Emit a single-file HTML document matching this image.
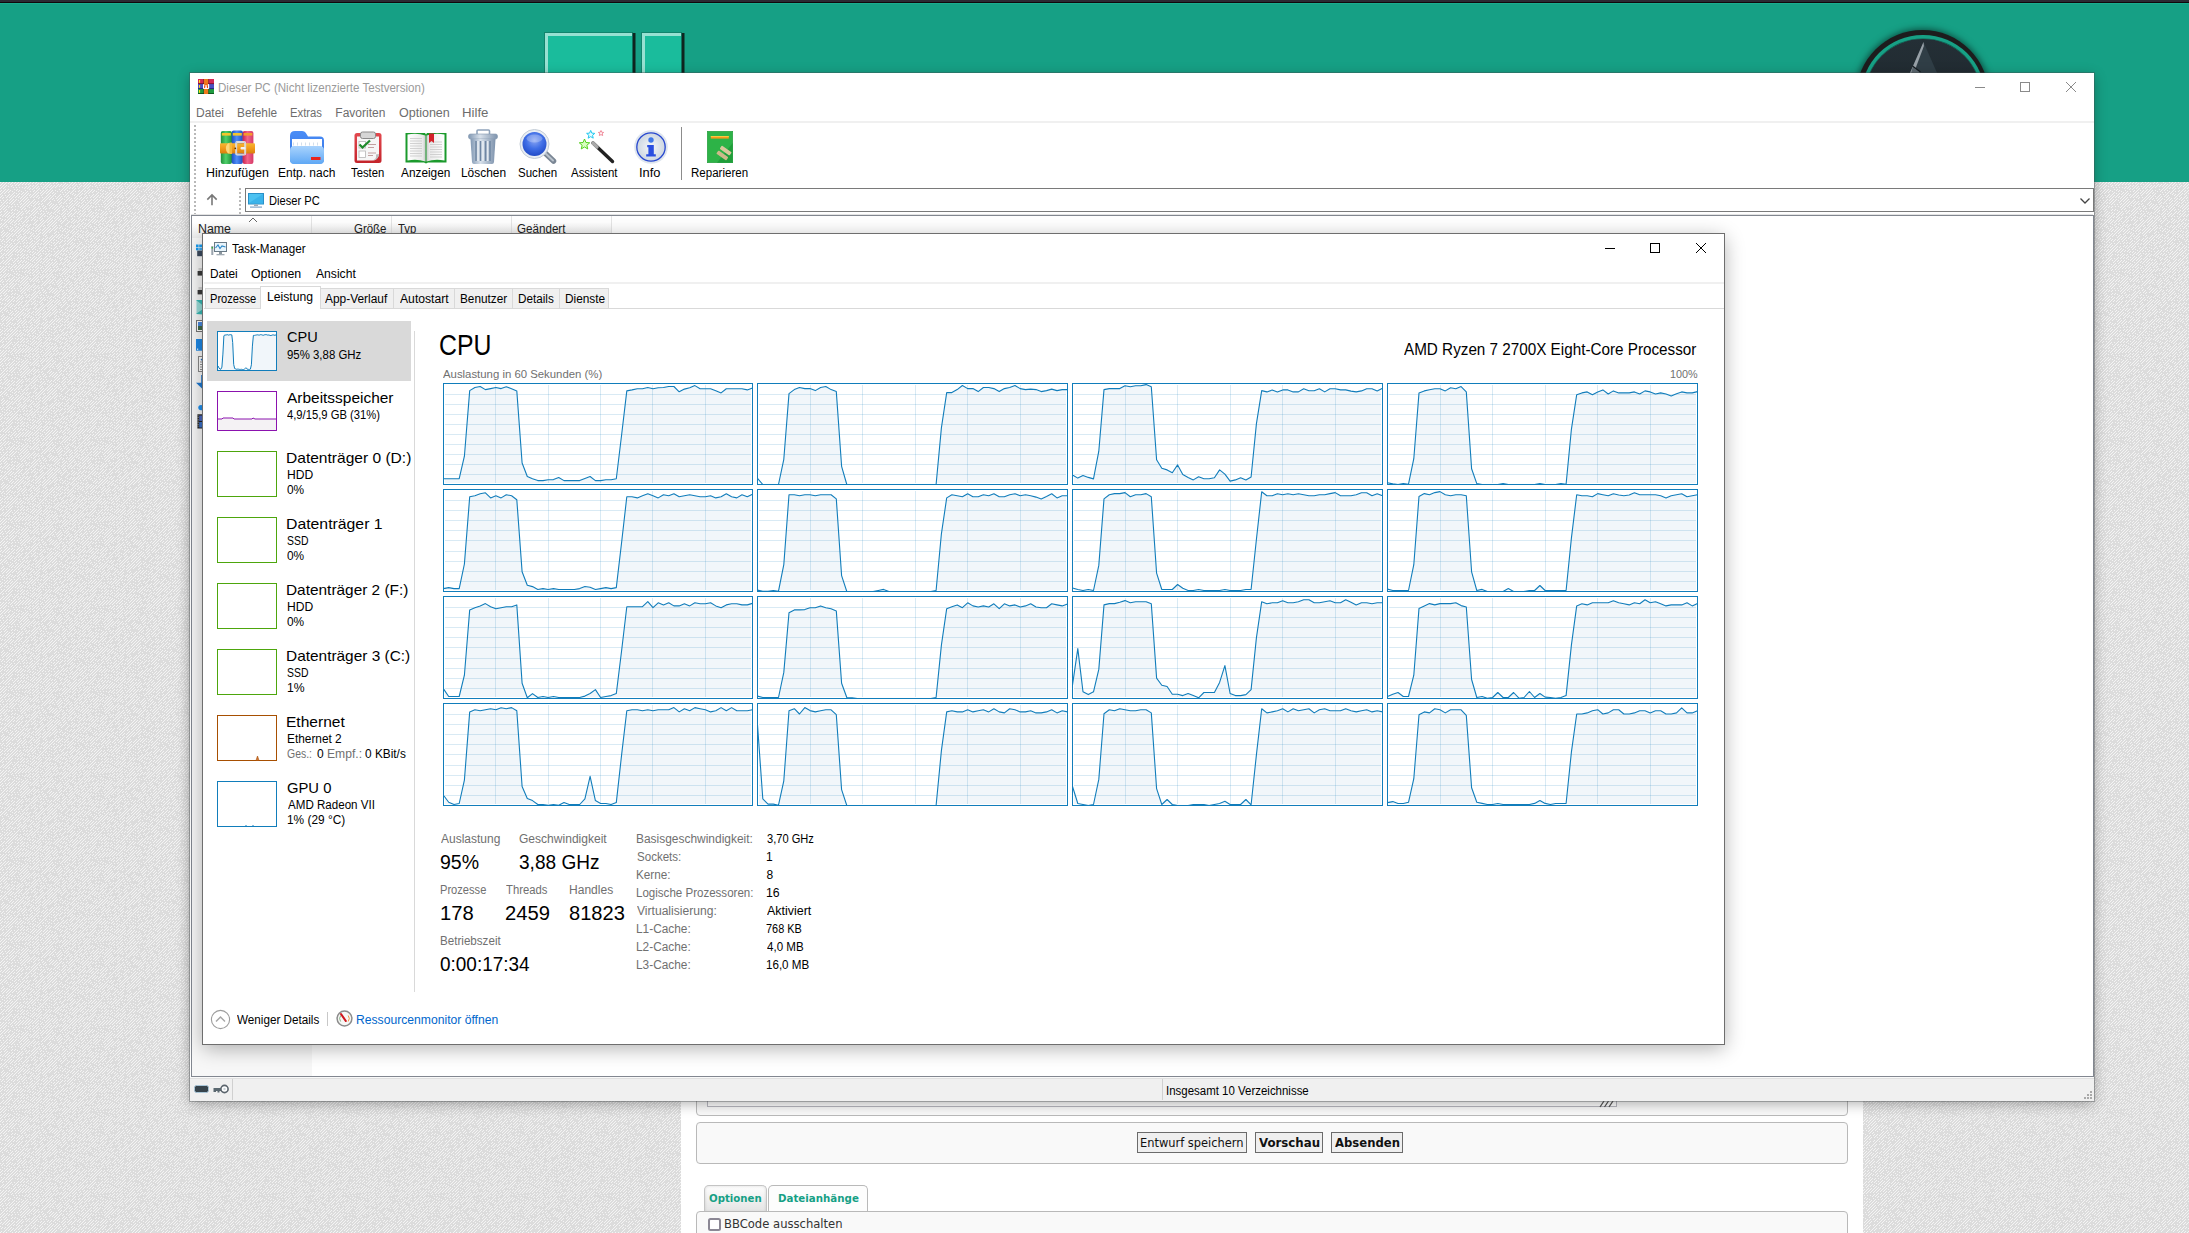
<!DOCTYPE html><html lang="de"><head><meta charset="utf-8"><title>Task-Manager</title><style>
html,body{margin:0;padding:0}
body{width:2189px;height:1233px;overflow:hidden;position:relative;background:#e4e4e4;font-family:"Liberation Sans",sans-serif}
.t{position:absolute;height:0;line-height:0;white-space:nowrap}
.abs{position:absolute}
</style></head><body>
<svg width="0" height="0" style="position:absolute"><defs>
<linearGradient id="gGreen" x1="0" x2="1"><stop offset="0" stop-color="#1f8f3a"/><stop offset=".45" stop-color="#4fd06a"/><stop offset="1" stop-color="#1f8f3a"/></linearGradient>
<linearGradient id="gBlue" x1="0" x2="1"><stop offset="0" stop-color="#1d4fc4"/><stop offset=".45" stop-color="#4f8df5"/><stop offset="1" stop-color="#1d4fc4"/></linearGradient>
<linearGradient id="gRed" x1="0" x2="1"><stop offset="0" stop-color="#c8214a"/><stop offset=".45" stop-color="#f0658a"/><stop offset="1" stop-color="#d63a68"/></linearGradient>
<linearGradient id="gBelt" x1="0" y1="0" x2="0" y2="1"><stop offset="0" stop-color="#f7b733"/><stop offset=".5" stop-color="#f19a1a"/><stop offset="1" stop-color="#d97f0e"/></linearGradient>
<linearGradient id="gFold" x1="0" y1="0" x2="0" y2="1"><stop offset="0" stop-color="#a9d3fd"/><stop offset="1" stop-color="#5fa8f5"/></linearGradient>
<linearGradient id="gFoldB" x1="0" y1="0" x2="0" y2="1"><stop offset="0" stop-color="#4b8ef7"/><stop offset="1" stop-color="#2f6fe0"/></linearGradient>
<linearGradient id="gPage" x1="0" x2="1"><stop offset="0" stop-color="#ffffff"/><stop offset=".85" stop-color="#e9e9e9"/><stop offset="1" stop-color="#c9c9c9"/></linearGradient>
<linearGradient id="gPage2" x1="0" x2="1"><stop offset="0" stop-color="#c9c9c9"/><stop offset=".15" stop-color="#e9e9e9"/><stop offset="1" stop-color="#ffffff"/></linearGradient>
<linearGradient id="gCan" x1="0" x2="1"><stop offset="0" stop-color="#8198b3"/><stop offset=".4" stop-color="#d7e0ea"/><stop offset="1" stop-color="#7e93ad"/></linearGradient>
<radialGradient id="gLens" cx=".5" cy=".35" r=".7"><stop offset="0" stop-color="#8aa6f3"/><stop offset=".5" stop-color="#3f6ee6"/><stop offset="1" stop-color="#1c45c2"/></radialGradient>
<radialGradient id="gInfo" cx=".5" cy=".5" r=".6"><stop offset="0" stop-color="#f4f7fa"/><stop offset="1" stop-color="#c5d0dc"/></radialGradient>
<linearGradient id="gClip" x1="0" y1="0" x2="0" y2="1"><stop offset="0" stop-color="#e2494f"/><stop offset="1" stop-color="#c4242b"/></linearGradient>
</defs></svg>
<svg class="abs" style="left:0;top:182px" width="2189" height="1051" shape-rendering="crispEdges"><defs><pattern id="tex" width="84" height="84" patternUnits="userSpaceOnUse"><rect width="84" height="84" fill="#dcdcdc"/><path d="M0 0h1v1h-1zM3 0h1v1h-1zM6 0h1v1h-1zM9 0h1v1h-1zM12 0h1v1h-1zM15 0h1v1h-1zM18 0h1v1h-1zM21 0h1v1h-1zM24 0h1v1h-1zM27 0h1v1h-1zM30 0h1v1h-1zM33 0h1v1h-1zM36 0h1v1h-1zM42 0h1v1h-1zM45 0h1v1h-1zM48 0h1v1h-1zM54 0h1v1h-1zM57 0h1v1h-1zM63 0h1v1h-1zM69 0h1v1h-1zM72 0h1v1h-1zM75 0h1v1h-1zM78 0h1v1h-1zM2 1h1v1h-1zM5 1h1v1h-1zM8 1h1v1h-1zM11 1h1v1h-1zM14 1h1v1h-1zM17 1h1v1h-1zM20 1h1v1h-1zM23 1h1v1h-1zM26 1h1v1h-1zM29 1h1v1h-1zM32 1h1v1h-1zM35 1h1v1h-1zM38 1h1v1h-1zM41 1h1v1h-1zM47 1h1v1h-1zM50 1h1v1h-1zM53 1h1v1h-1zM56 1h1v1h-1zM65 1h1v1h-1zM71 1h1v1h-1zM74 1h1v1h-1zM80 1h1v1h-1zM83 1h1v1h-1zM1 2h1v1h-1zM4 2h1v1h-1zM10 2h1v1h-1zM16 2h1v1h-1zM19 2h1v1h-1zM22 2h1v1h-1zM25 2h1v1h-1zM28 2h1v1h-1zM37 2h1v1h-1zM40 2h1v1h-1zM43 2h1v1h-1zM46 2h1v1h-1zM49 2h1v1h-1zM58 2h1v1h-1zM61 2h1v1h-1zM64 2h1v1h-1zM67 2h1v1h-1zM70 2h1v1h-1zM73 2h1v1h-1zM76 2h1v1h-1zM79 2h1v1h-1zM0 3h1v1h-1zM3 3h1v1h-1zM6 3h1v1h-1zM12 3h1v1h-1zM15 3h1v1h-1zM18 3h1v1h-1zM30 3h1v1h-1zM33 3h1v1h-1zM36 3h1v1h-1zM45 3h1v1h-1zM48 3h1v1h-1zM51 3h1v1h-1zM54 3h1v1h-1zM57 3h1v1h-1zM60 3h1v1h-1zM63 3h1v1h-1zM66 3h1v1h-1zM69 3h1v1h-1zM72 3h1v1h-1zM75 3h1v1h-1zM81 3h1v1h-1zM2 4h1v1h-1zM5 4h1v1h-1zM8 4h1v1h-1zM11 4h1v1h-1zM26 4h1v1h-1zM29 4h1v1h-1zM32 4h1v1h-1zM35 4h1v1h-1zM38 4h1v1h-1zM41 4h1v1h-1zM44 4h1v1h-1zM47 4h1v1h-1zM50 4h1v1h-1zM53 4h1v1h-1zM56 4h1v1h-1zM59 4h1v1h-1zM62 4h1v1h-1zM65 4h1v1h-1zM68 4h1v1h-1zM74 4h1v1h-1zM77 4h1v1h-1zM80 4h1v1h-1zM83 4h1v1h-1zM1 5h1v1h-1zM4 5h1v1h-1zM13 5h1v1h-1zM16 5h1v1h-1zM19 5h1v1h-1zM22 5h1v1h-1zM25 5h1v1h-1zM28 5h1v1h-1zM34 5h1v1h-1zM37 5h1v1h-1zM43 5h1v1h-1zM46 5h1v1h-1zM49 5h1v1h-1zM52 5h1v1h-1zM55 5h1v1h-1zM64 5h1v1h-1zM67 5h1v1h-1zM70 5h1v1h-1zM73 5h1v1h-1zM79 5h1v1h-1zM0 6h1v1h-1zM3 6h1v1h-1zM24 6h1v1h-1zM27 6h1v1h-1zM30 6h1v1h-1zM33 6h1v1h-1zM36 6h1v1h-1zM39 6h1v1h-1zM42 6h1v1h-1zM45 6h1v1h-1zM51 6h1v1h-1zM63 6h1v1h-1zM66 6h1v1h-1zM69 6h1v1h-1zM72 6h1v1h-1zM75 6h1v1h-1zM78 6h1v1h-1zM5 7h1v1h-1zM8 7h1v1h-1zM14 7h1v1h-1zM17 7h1v1h-1zM29 7h1v1h-1zM32 7h1v1h-1zM38 7h1v1h-1zM47 7h1v1h-1zM50 7h1v1h-1zM59 7h1v1h-1zM62 7h1v1h-1zM65 7h1v1h-1zM74 7h1v1h-1zM83 7h1v1h-1zM1 8h1v1h-1zM4 8h1v1h-1zM7 8h1v1h-1zM10 8h1v1h-1zM16 8h1v1h-1zM19 8h1v1h-1zM25 8h1v1h-1zM34 8h1v1h-1zM37 8h1v1h-1zM40 8h1v1h-1zM43 8h1v1h-1zM46 8h1v1h-1zM49 8h1v1h-1zM52 8h1v1h-1zM55 8h1v1h-1zM61 8h1v1h-1zM64 8h1v1h-1zM67 8h1v1h-1zM73 8h1v1h-1zM79 8h1v1h-1zM82 8h1v1h-1zM0 9h1v1h-1zM3 9h1v1h-1zM6 9h1v1h-1zM9 9h1v1h-1zM12 9h1v1h-1zM18 9h1v1h-1zM21 9h1v1h-1zM27 9h1v1h-1zM30 9h1v1h-1zM33 9h1v1h-1zM36 9h1v1h-1zM42 9h1v1h-1zM45 9h1v1h-1zM48 9h1v1h-1zM51 9h1v1h-1zM57 9h1v1h-1zM60 9h1v1h-1zM69 9h1v1h-1zM72 9h1v1h-1zM75 9h1v1h-1zM78 9h1v1h-1zM81 9h1v1h-1zM2 10h1v1h-1zM5 10h1v1h-1zM8 10h1v1h-1zM14 10h1v1h-1zM23 10h1v1h-1zM26 10h1v1h-1zM35 10h1v1h-1zM38 10h1v1h-1zM41 10h1v1h-1zM44 10h1v1h-1zM47 10h1v1h-1zM50 10h1v1h-1zM53 10h1v1h-1zM62 10h1v1h-1zM65 10h1v1h-1zM68 10h1v1h-1zM71 10h1v1h-1zM80 10h1v1h-1zM1 11h1v1h-1zM4 11h1v1h-1zM13 11h1v1h-1zM16 11h1v1h-1zM19 11h1v1h-1zM22 11h1v1h-1zM25 11h1v1h-1zM28 11h1v1h-1zM34 11h1v1h-1zM37 11h1v1h-1zM40 11h1v1h-1zM43 11h1v1h-1zM46 11h1v1h-1zM49 11h1v1h-1zM52 11h1v1h-1zM55 11h1v1h-1zM67 11h1v1h-1zM70 11h1v1h-1zM73 11h1v1h-1zM79 11h1v1h-1zM82 11h1v1h-1zM0 12h1v1h-1zM9 12h1v1h-1zM12 12h1v1h-1zM18 12h1v1h-1zM21 12h1v1h-1zM24 12h1v1h-1zM27 12h1v1h-1zM30 12h1v1h-1zM33 12h1v1h-1zM36 12h1v1h-1zM42 12h1v1h-1zM48 12h1v1h-1zM54 12h1v1h-1zM60 12h1v1h-1zM63 12h1v1h-1zM66 12h1v1h-1zM72 12h1v1h-1zM75 12h1v1h-1zM78 12h1v1h-1zM81 12h1v1h-1zM2 13h1v1h-1zM5 13h1v1h-1zM8 13h1v1h-1zM11 13h1v1h-1zM14 13h1v1h-1zM17 13h1v1h-1zM23 13h1v1h-1zM26 13h1v1h-1zM29 13h1v1h-1zM32 13h1v1h-1zM35 13h1v1h-1zM38 13h1v1h-1zM41 13h1v1h-1zM47 13h1v1h-1zM50 13h1v1h-1zM53 13h1v1h-1zM59 13h1v1h-1zM65 13h1v1h-1zM68 13h1v1h-1zM74 13h1v1h-1zM77 13h1v1h-1zM80 13h1v1h-1zM1 14h1v1h-1zM7 14h1v1h-1zM10 14h1v1h-1zM13 14h1v1h-1zM16 14h1v1h-1zM19 14h1v1h-1zM22 14h1v1h-1zM25 14h1v1h-1zM31 14h1v1h-1zM34 14h1v1h-1zM37 14h1v1h-1zM46 14h1v1h-1zM49 14h1v1h-1zM52 14h1v1h-1zM55 14h1v1h-1zM58 14h1v1h-1zM61 14h1v1h-1zM64 14h1v1h-1zM67 14h1v1h-1zM76 14h1v1h-1zM79 14h1v1h-1zM0 15h1v1h-1zM3 15h1v1h-1zM6 15h1v1h-1zM9 15h1v1h-1zM12 15h1v1h-1zM15 15h1v1h-1zM18 15h1v1h-1zM21 15h1v1h-1zM24 15h1v1h-1zM27 15h1v1h-1zM30 15h1v1h-1zM33 15h1v1h-1zM36 15h1v1h-1zM39 15h1v1h-1zM42 15h1v1h-1zM45 15h1v1h-1zM48 15h1v1h-1zM51 15h1v1h-1zM57 15h1v1h-1zM60 15h1v1h-1zM66 15h1v1h-1zM69 15h1v1h-1zM75 15h1v1h-1zM81 15h1v1h-1zM2 16h1v1h-1zM11 16h1v1h-1zM20 16h1v1h-1zM23 16h1v1h-1zM26 16h1v1h-1zM38 16h1v1h-1zM44 16h1v1h-1zM47 16h1v1h-1zM50 16h1v1h-1zM53 16h1v1h-1zM56 16h1v1h-1zM59 16h1v1h-1zM62 16h1v1h-1zM68 16h1v1h-1zM71 16h1v1h-1zM74 16h1v1h-1zM77 16h1v1h-1zM80 16h1v1h-1zM83 16h1v1h-1zM7 17h1v1h-1zM10 17h1v1h-1zM13 17h1v1h-1zM16 17h1v1h-1zM22 17h1v1h-1zM25 17h1v1h-1zM28 17h1v1h-1zM34 17h1v1h-1zM43 17h1v1h-1zM46 17h1v1h-1zM49 17h1v1h-1zM52 17h1v1h-1zM58 17h1v1h-1zM61 17h1v1h-1zM64 17h1v1h-1zM67 17h1v1h-1zM70 17h1v1h-1zM76 17h1v1h-1zM79 17h1v1h-1zM82 17h1v1h-1zM0 18h1v1h-1zM3 18h1v1h-1zM6 18h1v1h-1zM9 18h1v1h-1zM12 18h1v1h-1zM15 18h1v1h-1zM18 18h1v1h-1zM21 18h1v1h-1zM24 18h1v1h-1zM27 18h1v1h-1zM33 18h1v1h-1zM42 18h1v1h-1zM45 18h1v1h-1zM54 18h1v1h-1zM57 18h1v1h-1zM60 18h1v1h-1zM66 18h1v1h-1zM69 18h1v1h-1zM72 18h1v1h-1zM75 18h1v1h-1zM81 18h1v1h-1zM5 19h1v1h-1zM11 19h1v1h-1zM14 19h1v1h-1zM20 19h1v1h-1zM23 19h1v1h-1zM26 19h1v1h-1zM29 19h1v1h-1zM32 19h1v1h-1zM35 19h1v1h-1zM38 19h1v1h-1zM41 19h1v1h-1zM44 19h1v1h-1zM50 19h1v1h-1zM59 19h1v1h-1zM65 19h1v1h-1zM71 19h1v1h-1zM74 19h1v1h-1zM77 19h1v1h-1zM83 19h1v1h-1zM1 20h1v1h-1zM4 20h1v1h-1zM7 20h1v1h-1zM10 20h1v1h-1zM13 20h1v1h-1zM19 20h1v1h-1zM25 20h1v1h-1zM28 20h1v1h-1zM31 20h1v1h-1zM34 20h1v1h-1zM37 20h1v1h-1zM49 20h1v1h-1zM58 20h1v1h-1zM61 20h1v1h-1zM64 20h1v1h-1zM70 20h1v1h-1zM76 20h1v1h-1zM79 20h1v1h-1zM82 20h1v1h-1zM3 21h1v1h-1zM6 21h1v1h-1zM9 21h1v1h-1zM12 21h1v1h-1zM21 21h1v1h-1zM24 21h1v1h-1zM27 21h1v1h-1zM30 21h1v1h-1zM33 21h1v1h-1zM36 21h1v1h-1zM39 21h1v1h-1zM42 21h1v1h-1zM48 21h1v1h-1zM51 21h1v1h-1zM60 21h1v1h-1zM63 21h1v1h-1zM66 21h1v1h-1zM69 21h1v1h-1zM72 21h1v1h-1zM75 21h1v1h-1zM78 21h1v1h-1zM81 21h1v1h-1zM2 22h1v1h-1zM11 22h1v1h-1zM14 22h1v1h-1zM17 22h1v1h-1zM20 22h1v1h-1zM23 22h1v1h-1zM26 22h1v1h-1zM29 22h1v1h-1zM35 22h1v1h-1zM38 22h1v1h-1zM41 22h1v1h-1zM47 22h1v1h-1zM50 22h1v1h-1zM53 22h1v1h-1zM56 22h1v1h-1zM59 22h1v1h-1zM71 22h1v1h-1zM74 22h1v1h-1zM77 22h1v1h-1zM83 22h1v1h-1zM1 23h1v1h-1zM4 23h1v1h-1zM7 23h1v1h-1zM22 23h1v1h-1zM25 23h1v1h-1zM28 23h1v1h-1zM31 23h1v1h-1zM34 23h1v1h-1zM43 23h1v1h-1zM49 23h1v1h-1zM52 23h1v1h-1zM55 23h1v1h-1zM61 23h1v1h-1zM67 23h1v1h-1zM70 23h1v1h-1zM73 23h1v1h-1zM76 23h1v1h-1zM79 23h1v1h-1zM82 23h1v1h-1zM0 24h1v1h-1zM3 24h1v1h-1zM6 24h1v1h-1zM9 24h1v1h-1zM12 24h1v1h-1zM15 24h1v1h-1zM18 24h1v1h-1zM21 24h1v1h-1zM24 24h1v1h-1zM27 24h1v1h-1zM33 24h1v1h-1zM39 24h1v1h-1zM42 24h1v1h-1zM45 24h1v1h-1zM51 24h1v1h-1zM54 24h1v1h-1zM57 24h1v1h-1zM60 24h1v1h-1zM63 24h1v1h-1zM66 24h1v1h-1zM69 24h1v1h-1zM72 24h1v1h-1zM78 24h1v1h-1zM81 24h1v1h-1zM2 25h1v1h-1zM5 25h1v1h-1zM8 25h1v1h-1zM11 25h1v1h-1zM20 25h1v1h-1zM23 25h1v1h-1zM29 25h1v1h-1zM35 25h1v1h-1zM38 25h1v1h-1zM44 25h1v1h-1zM50 25h1v1h-1zM53 25h1v1h-1zM56 25h1v1h-1zM59 25h1v1h-1zM62 25h1v1h-1zM68 25h1v1h-1zM71 25h1v1h-1zM74 25h1v1h-1zM80 25h1v1h-1zM83 25h1v1h-1zM1 26h1v1h-1zM4 26h1v1h-1zM22 26h1v1h-1zM25 26h1v1h-1zM34 26h1v1h-1zM37 26h1v1h-1zM40 26h1v1h-1zM43 26h1v1h-1zM46 26h1v1h-1zM49 26h1v1h-1zM52 26h1v1h-1zM55 26h1v1h-1zM58 26h1v1h-1zM64 26h1v1h-1zM70 26h1v1h-1zM73 26h1v1h-1zM82 26h1v1h-1zM0 27h1v1h-1zM3 27h1v1h-1zM6 27h1v1h-1zM12 27h1v1h-1zM15 27h1v1h-1zM21 27h1v1h-1zM24 27h1v1h-1zM33 27h1v1h-1zM36 27h1v1h-1zM39 27h1v1h-1zM45 27h1v1h-1zM54 27h1v1h-1zM57 27h1v1h-1zM63 27h1v1h-1zM66 27h1v1h-1zM69 27h1v1h-1zM72 27h1v1h-1zM75 27h1v1h-1zM78 27h1v1h-1zM5 28h1v1h-1zM11 28h1v1h-1zM14 28h1v1h-1zM17 28h1v1h-1zM26 28h1v1h-1zM29 28h1v1h-1zM32 28h1v1h-1zM35 28h1v1h-1zM41 28h1v1h-1zM56 28h1v1h-1zM59 28h1v1h-1zM62 28h1v1h-1zM65 28h1v1h-1zM71 28h1v1h-1zM74 28h1v1h-1zM80 28h1v1h-1zM83 28h1v1h-1zM1 29h1v1h-1zM4 29h1v1h-1zM7 29h1v1h-1zM19 29h1v1h-1zM22 29h1v1h-1zM25 29h1v1h-1zM28 29h1v1h-1zM31 29h1v1h-1zM34 29h1v1h-1zM37 29h1v1h-1zM40 29h1v1h-1zM43 29h1v1h-1zM46 29h1v1h-1zM55 29h1v1h-1zM58 29h1v1h-1zM64 29h1v1h-1zM67 29h1v1h-1zM70 29h1v1h-1zM76 29h1v1h-1zM79 29h1v1h-1zM82 29h1v1h-1zM0 30h1v1h-1zM6 30h1v1h-1zM9 30h1v1h-1zM12 30h1v1h-1zM18 30h1v1h-1zM21 30h1v1h-1zM27 30h1v1h-1zM33 30h1v1h-1zM36 30h1v1h-1zM48 30h1v1h-1zM51 30h1v1h-1zM54 30h1v1h-1zM57 30h1v1h-1zM63 30h1v1h-1zM69 30h1v1h-1zM75 30h1v1h-1zM78 30h1v1h-1zM5 31h1v1h-1zM8 31h1v1h-1zM11 31h1v1h-1zM14 31h1v1h-1zM17 31h1v1h-1zM20 31h1v1h-1zM23 31h1v1h-1zM26 31h1v1h-1zM29 31h1v1h-1zM32 31h1v1h-1zM35 31h1v1h-1zM38 31h1v1h-1zM41 31h1v1h-1zM44 31h1v1h-1zM47 31h1v1h-1zM50 31h1v1h-1zM53 31h1v1h-1zM59 31h1v1h-1zM62 31h1v1h-1zM65 31h1v1h-1zM68 31h1v1h-1zM71 31h1v1h-1zM74 31h1v1h-1zM77 31h1v1h-1zM80 31h1v1h-1zM83 31h1v1h-1zM1 32h1v1h-1zM4 32h1v1h-1zM7 32h1v1h-1zM13 32h1v1h-1zM16 32h1v1h-1zM19 32h1v1h-1zM22 32h1v1h-1zM31 32h1v1h-1zM34 32h1v1h-1zM40 32h1v1h-1zM43 32h1v1h-1zM49 32h1v1h-1zM55 32h1v1h-1zM61 32h1v1h-1zM64 32h1v1h-1zM67 32h1v1h-1zM70 32h1v1h-1zM73 32h1v1h-1zM79 32h1v1h-1zM82 32h1v1h-1zM0 33h1v1h-1zM3 33h1v1h-1zM6 33h1v1h-1zM9 33h1v1h-1zM12 33h1v1h-1zM18 33h1v1h-1zM21 33h1v1h-1zM30 33h1v1h-1zM33 33h1v1h-1zM42 33h1v1h-1zM45 33h1v1h-1zM51 33h1v1h-1zM57 33h1v1h-1zM63 33h1v1h-1zM69 33h1v1h-1zM72 33h1v1h-1zM81 33h1v1h-1zM2 34h1v1h-1zM5 34h1v1h-1zM8 34h1v1h-1zM11 34h1v1h-1zM14 34h1v1h-1zM17 34h1v1h-1zM26 34h1v1h-1zM29 34h1v1h-1zM35 34h1v1h-1zM41 34h1v1h-1zM44 34h1v1h-1zM47 34h1v1h-1zM50 34h1v1h-1zM53 34h1v1h-1zM56 34h1v1h-1zM59 34h1v1h-1zM62 34h1v1h-1zM65 34h1v1h-1zM68 34h1v1h-1zM71 34h1v1h-1zM74 34h1v1h-1zM77 34h1v1h-1zM80 34h1v1h-1zM83 34h1v1h-1zM7 35h1v1h-1zM10 35h1v1h-1zM13 35h1v1h-1zM16 35h1v1h-1zM19 35h1v1h-1zM22 35h1v1h-1zM25 35h1v1h-1zM28 35h1v1h-1zM31 35h1v1h-1zM34 35h1v1h-1zM37 35h1v1h-1zM40 35h1v1h-1zM49 35h1v1h-1zM52 35h1v1h-1zM55 35h1v1h-1zM58 35h1v1h-1zM64 35h1v1h-1zM79 35h1v1h-1zM0 36h1v1h-1zM9 36h1v1h-1zM18 36h1v1h-1zM21 36h1v1h-1zM27 36h1v1h-1zM33 36h1v1h-1zM39 36h1v1h-1zM42 36h1v1h-1zM48 36h1v1h-1zM51 36h1v1h-1zM54 36h1v1h-1zM57 36h1v1h-1zM60 36h1v1h-1zM63 36h1v1h-1zM66 36h1v1h-1zM72 36h1v1h-1zM78 36h1v1h-1zM2 37h1v1h-1zM5 37h1v1h-1zM8 37h1v1h-1zM11 37h1v1h-1zM17 37h1v1h-1zM20 37h1v1h-1zM26 37h1v1h-1zM32 37h1v1h-1zM35 37h1v1h-1zM41 37h1v1h-1zM47 37h1v1h-1zM50 37h1v1h-1zM56 37h1v1h-1zM59 37h1v1h-1zM65 37h1v1h-1zM71 37h1v1h-1zM74 37h1v1h-1zM80 37h1v1h-1zM83 37h1v1h-1zM1 38h1v1h-1zM4 38h1v1h-1zM7 38h1v1h-1zM10 38h1v1h-1zM13 38h1v1h-1zM16 38h1v1h-1zM19 38h1v1h-1zM25 38h1v1h-1zM28 38h1v1h-1zM31 38h1v1h-1zM34 38h1v1h-1zM37 38h1v1h-1zM40 38h1v1h-1zM43 38h1v1h-1zM46 38h1v1h-1zM49 38h1v1h-1zM52 38h1v1h-1zM55 38h1v1h-1zM58 38h1v1h-1zM61 38h1v1h-1zM64 38h1v1h-1zM67 38h1v1h-1zM73 38h1v1h-1zM76 38h1v1h-1zM79 38h1v1h-1zM82 38h1v1h-1zM6 39h1v1h-1zM9 39h1v1h-1zM12 39h1v1h-1zM15 39h1v1h-1zM18 39h1v1h-1zM21 39h1v1h-1zM24 39h1v1h-1zM27 39h1v1h-1zM36 39h1v1h-1zM42 39h1v1h-1zM45 39h1v1h-1zM48 39h1v1h-1zM51 39h1v1h-1zM54 39h1v1h-1zM60 39h1v1h-1zM63 39h1v1h-1zM69 39h1v1h-1zM72 39h1v1h-1zM75 39h1v1h-1zM78 39h1v1h-1zM81 39h1v1h-1zM5 40h1v1h-1zM8 40h1v1h-1zM11 40h1v1h-1zM14 40h1v1h-1zM23 40h1v1h-1zM26 40h1v1h-1zM35 40h1v1h-1zM41 40h1v1h-1zM44 40h1v1h-1zM47 40h1v1h-1zM50 40h1v1h-1zM53 40h1v1h-1zM56 40h1v1h-1zM62 40h1v1h-1zM68 40h1v1h-1zM71 40h1v1h-1zM74 40h1v1h-1zM77 40h1v1h-1zM83 40h1v1h-1zM1 41h1v1h-1zM4 41h1v1h-1zM10 41h1v1h-1zM16 41h1v1h-1zM19 41h1v1h-1zM22 41h1v1h-1zM34 41h1v1h-1zM40 41h1v1h-1zM43 41h1v1h-1zM49 41h1v1h-1zM52 41h1v1h-1zM55 41h1v1h-1zM61 41h1v1h-1zM67 41h1v1h-1zM73 41h1v1h-1zM79 41h1v1h-1zM82 41h1v1h-1zM0 42h1v1h-1zM3 42h1v1h-1zM6 42h1v1h-1zM12 42h1v1h-1zM15 42h1v1h-1zM18 42h1v1h-1zM24 42h1v1h-1zM27 42h1v1h-1zM30 42h1v1h-1zM33 42h1v1h-1zM36 42h1v1h-1zM39 42h1v1h-1zM42 42h1v1h-1zM48 42h1v1h-1zM51 42h1v1h-1zM54 42h1v1h-1zM66 42h1v1h-1zM78 42h1v1h-1zM81 42h1v1h-1zM2 43h1v1h-1zM5 43h1v1h-1zM14 43h1v1h-1zM20 43h1v1h-1zM23 43h1v1h-1zM26 43h1v1h-1zM29 43h1v1h-1zM35 43h1v1h-1zM38 43h1v1h-1zM41 43h1v1h-1zM44 43h1v1h-1zM47 43h1v1h-1zM50 43h1v1h-1zM53 43h1v1h-1zM56 43h1v1h-1zM59 43h1v1h-1zM65 43h1v1h-1zM71 43h1v1h-1zM74 43h1v1h-1zM77 43h1v1h-1zM80 43h1v1h-1zM1 44h1v1h-1zM4 44h1v1h-1zM7 44h1v1h-1zM10 44h1v1h-1zM16 44h1v1h-1zM22 44h1v1h-1zM25 44h1v1h-1zM28 44h1v1h-1zM37 44h1v1h-1zM40 44h1v1h-1zM43 44h1v1h-1zM49 44h1v1h-1zM52 44h1v1h-1zM55 44h1v1h-1zM61 44h1v1h-1zM67 44h1v1h-1zM70 44h1v1h-1zM73 44h1v1h-1zM76 44h1v1h-1zM79 44h1v1h-1zM82 44h1v1h-1zM0 45h1v1h-1zM6 45h1v1h-1zM12 45h1v1h-1zM15 45h1v1h-1zM18 45h1v1h-1zM21 45h1v1h-1zM27 45h1v1h-1zM33 45h1v1h-1zM36 45h1v1h-1zM39 45h1v1h-1zM45 45h1v1h-1zM48 45h1v1h-1zM54 45h1v1h-1zM57 45h1v1h-1zM60 45h1v1h-1zM69 45h1v1h-1zM72 45h1v1h-1zM75 45h1v1h-1zM78 45h1v1h-1zM2 46h1v1h-1zM8 46h1v1h-1zM11 46h1v1h-1zM17 46h1v1h-1zM20 46h1v1h-1zM23 46h1v1h-1zM29 46h1v1h-1zM32 46h1v1h-1zM35 46h1v1h-1zM38 46h1v1h-1zM44 46h1v1h-1zM47 46h1v1h-1zM50 46h1v1h-1zM53 46h1v1h-1zM56 46h1v1h-1zM59 46h1v1h-1zM62 46h1v1h-1zM65 46h1v1h-1zM74 46h1v1h-1zM80 46h1v1h-1zM83 46h1v1h-1zM10 47h1v1h-1zM13 47h1v1h-1zM16 47h1v1h-1zM19 47h1v1h-1zM22 47h1v1h-1zM25 47h1v1h-1zM28 47h1v1h-1zM31 47h1v1h-1zM37 47h1v1h-1zM40 47h1v1h-1zM43 47h1v1h-1zM46 47h1v1h-1zM49 47h1v1h-1zM52 47h1v1h-1zM55 47h1v1h-1zM64 47h1v1h-1zM67 47h1v1h-1zM73 47h1v1h-1zM76 47h1v1h-1zM3 48h1v1h-1zM9 48h1v1h-1zM12 48h1v1h-1zM15 48h1v1h-1zM18 48h1v1h-1zM21 48h1v1h-1zM24 48h1v1h-1zM27 48h1v1h-1zM33 48h1v1h-1zM36 48h1v1h-1zM39 48h1v1h-1zM42 48h1v1h-1zM45 48h1v1h-1zM48 48h1v1h-1zM51 48h1v1h-1zM54 48h1v1h-1zM60 48h1v1h-1zM63 48h1v1h-1zM69 48h1v1h-1zM72 48h1v1h-1zM78 48h1v1h-1zM81 48h1v1h-1zM2 49h1v1h-1zM11 49h1v1h-1zM14 49h1v1h-1zM17 49h1v1h-1zM20 49h1v1h-1zM23 49h1v1h-1zM26 49h1v1h-1zM29 49h1v1h-1zM35 49h1v1h-1zM38 49h1v1h-1zM44 49h1v1h-1zM47 49h1v1h-1zM50 49h1v1h-1zM56 49h1v1h-1zM62 49h1v1h-1zM65 49h1v1h-1zM68 49h1v1h-1zM71 49h1v1h-1zM74 49h1v1h-1zM77 49h1v1h-1zM80 49h1v1h-1zM83 49h1v1h-1zM1 50h1v1h-1zM4 50h1v1h-1zM7 50h1v1h-1zM16 50h1v1h-1zM19 50h1v1h-1zM25 50h1v1h-1zM28 50h1v1h-1zM31 50h1v1h-1zM40 50h1v1h-1zM43 50h1v1h-1zM46 50h1v1h-1zM49 50h1v1h-1zM55 50h1v1h-1zM58 50h1v1h-1zM67 50h1v1h-1zM70 50h1v1h-1zM73 50h1v1h-1zM76 50h1v1h-1zM82 50h1v1h-1zM3 51h1v1h-1zM6 51h1v1h-1zM9 51h1v1h-1zM12 51h1v1h-1zM15 51h1v1h-1zM18 51h1v1h-1zM24 51h1v1h-1zM27 51h1v1h-1zM30 51h1v1h-1zM33 51h1v1h-1zM36 51h1v1h-1zM39 51h1v1h-1zM42 51h1v1h-1zM45 51h1v1h-1zM54 51h1v1h-1zM66 51h1v1h-1zM72 51h1v1h-1zM75 51h1v1h-1zM78 51h1v1h-1zM2 52h1v1h-1zM5 52h1v1h-1zM8 52h1v1h-1zM11 52h1v1h-1zM14 52h1v1h-1zM20 52h1v1h-1zM23 52h1v1h-1zM32 52h1v1h-1zM38 52h1v1h-1zM44 52h1v1h-1zM56 52h1v1h-1zM59 52h1v1h-1zM62 52h1v1h-1zM68 52h1v1h-1zM74 52h1v1h-1zM77 52h1v1h-1zM80 52h1v1h-1zM83 52h1v1h-1zM1 53h1v1h-1zM4 53h1v1h-1zM7 53h1v1h-1zM10 53h1v1h-1zM13 53h1v1h-1zM16 53h1v1h-1zM19 53h1v1h-1zM25 53h1v1h-1zM31 53h1v1h-1zM34 53h1v1h-1zM37 53h1v1h-1zM43 53h1v1h-1zM46 53h1v1h-1zM52 53h1v1h-1zM55 53h1v1h-1zM58 53h1v1h-1zM61 53h1v1h-1zM64 53h1v1h-1zM67 53h1v1h-1zM73 53h1v1h-1zM79 53h1v1h-1zM82 53h1v1h-1zM3 54h1v1h-1zM6 54h1v1h-1zM9 54h1v1h-1zM12 54h1v1h-1zM18 54h1v1h-1zM21 54h1v1h-1zM24 54h1v1h-1zM30 54h1v1h-1zM33 54h1v1h-1zM36 54h1v1h-1zM39 54h1v1h-1zM45 54h1v1h-1zM51 54h1v1h-1zM54 54h1v1h-1zM57 54h1v1h-1zM60 54h1v1h-1zM66 54h1v1h-1zM72 54h1v1h-1zM75 54h1v1h-1zM78 54h1v1h-1zM81 54h1v1h-1zM2 55h1v1h-1zM8 55h1v1h-1zM17 55h1v1h-1zM20 55h1v1h-1zM23 55h1v1h-1zM26 55h1v1h-1zM29 55h1v1h-1zM35 55h1v1h-1zM38 55h1v1h-1zM47 55h1v1h-1zM50 55h1v1h-1zM53 55h1v1h-1zM56 55h1v1h-1zM59 55h1v1h-1zM62 55h1v1h-1zM65 55h1v1h-1zM68 55h1v1h-1zM71 55h1v1h-1zM77 55h1v1h-1zM80 55h1v1h-1zM83 55h1v1h-1zM7 56h1v1h-1zM10 56h1v1h-1zM19 56h1v1h-1zM22 56h1v1h-1zM25 56h1v1h-1zM28 56h1v1h-1zM31 56h1v1h-1zM34 56h1v1h-1zM37 56h1v1h-1zM43 56h1v1h-1zM46 56h1v1h-1zM49 56h1v1h-1zM52 56h1v1h-1zM58 56h1v1h-1zM64 56h1v1h-1zM67 56h1v1h-1zM70 56h1v1h-1zM73 56h1v1h-1zM82 56h1v1h-1zM0 57h1v1h-1zM3 57h1v1h-1zM6 57h1v1h-1zM9 57h1v1h-1zM12 57h1v1h-1zM15 57h1v1h-1zM18 57h1v1h-1zM21 57h1v1h-1zM24 57h1v1h-1zM30 57h1v1h-1zM36 57h1v1h-1zM39 57h1v1h-1zM42 57h1v1h-1zM45 57h1v1h-1zM51 57h1v1h-1zM54 57h1v1h-1zM60 57h1v1h-1zM69 57h1v1h-1zM72 57h1v1h-1zM75 57h1v1h-1zM78 57h1v1h-1zM2 58h1v1h-1zM8 58h1v1h-1zM11 58h1v1h-1zM14 58h1v1h-1zM17 58h1v1h-1zM23 58h1v1h-1zM26 58h1v1h-1zM32 58h1v1h-1zM38 58h1v1h-1zM41 58h1v1h-1zM44 58h1v1h-1zM47 58h1v1h-1zM50 58h1v1h-1zM53 58h1v1h-1zM56 58h1v1h-1zM62 58h1v1h-1zM65 58h1v1h-1zM68 58h1v1h-1zM71 58h1v1h-1zM74 58h1v1h-1zM1 59h1v1h-1zM4 59h1v1h-1zM7 59h1v1h-1zM13 59h1v1h-1zM19 59h1v1h-1zM22 59h1v1h-1zM31 59h1v1h-1zM34 59h1v1h-1zM37 59h1v1h-1zM43 59h1v1h-1zM46 59h1v1h-1zM49 59h1v1h-1zM58 59h1v1h-1zM61 59h1v1h-1zM64 59h1v1h-1zM67 59h1v1h-1zM70 59h1v1h-1zM79 59h1v1h-1zM6 60h1v1h-1zM9 60h1v1h-1zM18 60h1v1h-1zM24 60h1v1h-1zM27 60h1v1h-1zM30 60h1v1h-1zM36 60h1v1h-1zM45 60h1v1h-1zM48 60h1v1h-1zM51 60h1v1h-1zM54 60h1v1h-1zM57 60h1v1h-1zM60 60h1v1h-1zM69 60h1v1h-1zM72 60h1v1h-1zM81 60h1v1h-1zM2 61h1v1h-1zM11 61h1v1h-1zM14 61h1v1h-1zM17 61h1v1h-1zM20 61h1v1h-1zM23 61h1v1h-1zM26 61h1v1h-1zM29 61h1v1h-1zM32 61h1v1h-1zM35 61h1v1h-1zM38 61h1v1h-1zM41 61h1v1h-1zM44 61h1v1h-1zM47 61h1v1h-1zM53 61h1v1h-1zM56 61h1v1h-1zM59 61h1v1h-1zM65 61h1v1h-1zM68 61h1v1h-1zM71 61h1v1h-1zM74 61h1v1h-1zM77 61h1v1h-1zM80 61h1v1h-1zM4 62h1v1h-1zM7 62h1v1h-1zM10 62h1v1h-1zM16 62h1v1h-1zM31 62h1v1h-1zM34 62h1v1h-1zM37 62h1v1h-1zM40 62h1v1h-1zM43 62h1v1h-1zM46 62h1v1h-1zM49 62h1v1h-1zM55 62h1v1h-1zM64 62h1v1h-1zM67 62h1v1h-1zM70 62h1v1h-1zM73 62h1v1h-1zM79 62h1v1h-1zM82 62h1v1h-1zM0 63h1v1h-1zM6 63h1v1h-1zM9 63h1v1h-1zM12 63h1v1h-1zM15 63h1v1h-1zM24 63h1v1h-1zM27 63h1v1h-1zM30 63h1v1h-1zM33 63h1v1h-1zM45 63h1v1h-1zM51 63h1v1h-1zM54 63h1v1h-1zM60 63h1v1h-1zM63 63h1v1h-1zM72 63h1v1h-1zM75 63h1v1h-1zM78 63h1v1h-1zM2 64h1v1h-1zM5 64h1v1h-1zM8 64h1v1h-1zM11 64h1v1h-1zM14 64h1v1h-1zM17 64h1v1h-1zM20 64h1v1h-1zM23 64h1v1h-1zM26 64h1v1h-1zM29 64h1v1h-1zM32 64h1v1h-1zM35 64h1v1h-1zM38 64h1v1h-1zM44 64h1v1h-1zM56 64h1v1h-1zM59 64h1v1h-1zM62 64h1v1h-1zM71 64h1v1h-1zM74 64h1v1h-1zM77 64h1v1h-1zM83 64h1v1h-1zM1 65h1v1h-1zM4 65h1v1h-1zM7 65h1v1h-1zM10 65h1v1h-1zM13 65h1v1h-1zM16 65h1v1h-1zM19 65h1v1h-1zM25 65h1v1h-1zM28 65h1v1h-1zM31 65h1v1h-1zM34 65h1v1h-1zM40 65h1v1h-1zM43 65h1v1h-1zM46 65h1v1h-1zM49 65h1v1h-1zM55 65h1v1h-1zM61 65h1v1h-1zM67 65h1v1h-1zM70 65h1v1h-1zM73 65h1v1h-1zM76 65h1v1h-1zM79 65h1v1h-1zM82 65h1v1h-1zM0 66h1v1h-1zM12 66h1v1h-1zM15 66h1v1h-1zM21 66h1v1h-1zM27 66h1v1h-1zM33 66h1v1h-1zM39 66h1v1h-1zM42 66h1v1h-1zM45 66h1v1h-1zM51 66h1v1h-1zM54 66h1v1h-1zM57 66h1v1h-1zM63 66h1v1h-1zM66 66h1v1h-1zM69 66h1v1h-1zM72 66h1v1h-1zM78 66h1v1h-1zM81 66h1v1h-1zM2 67h1v1h-1zM5 67h1v1h-1zM8 67h1v1h-1zM11 67h1v1h-1zM14 67h1v1h-1zM17 67h1v1h-1zM20 67h1v1h-1zM23 67h1v1h-1zM29 67h1v1h-1zM32 67h1v1h-1zM35 67h1v1h-1zM41 67h1v1h-1zM47 67h1v1h-1zM53 67h1v1h-1zM62 67h1v1h-1zM65 67h1v1h-1zM71 67h1v1h-1zM77 67h1v1h-1zM80 67h1v1h-1zM1 68h1v1h-1zM4 68h1v1h-1zM7 68h1v1h-1zM10 68h1v1h-1zM13 68h1v1h-1zM16 68h1v1h-1zM19 68h1v1h-1zM22 68h1v1h-1zM25 68h1v1h-1zM28 68h1v1h-1zM37 68h1v1h-1zM40 68h1v1h-1zM43 68h1v1h-1zM49 68h1v1h-1zM58 68h1v1h-1zM61 68h1v1h-1zM64 68h1v1h-1zM67 68h1v1h-1zM70 68h1v1h-1zM76 68h1v1h-1zM79 68h1v1h-1zM82 68h1v1h-1zM0 69h1v1h-1zM6 69h1v1h-1zM9 69h1v1h-1zM12 69h1v1h-1zM15 69h1v1h-1zM18 69h1v1h-1zM21 69h1v1h-1zM24 69h1v1h-1zM27 69h1v1h-1zM30 69h1v1h-1zM33 69h1v1h-1zM39 69h1v1h-1zM42 69h1v1h-1zM45 69h1v1h-1zM48 69h1v1h-1zM51 69h1v1h-1zM54 69h1v1h-1zM57 69h1v1h-1zM60 69h1v1h-1zM63 69h1v1h-1zM66 69h1v1h-1zM72 69h1v1h-1zM75 69h1v1h-1zM81 69h1v1h-1zM8 70h1v1h-1zM11 70h1v1h-1zM17 70h1v1h-1zM20 70h1v1h-1zM29 70h1v1h-1zM32 70h1v1h-1zM35 70h1v1h-1zM38 70h1v1h-1zM56 70h1v1h-1zM59 70h1v1h-1zM68 70h1v1h-1zM71 70h1v1h-1zM74 70h1v1h-1zM77 70h1v1h-1zM80 70h1v1h-1zM83 70h1v1h-1zM1 71h1v1h-1zM4 71h1v1h-1zM7 71h1v1h-1zM10 71h1v1h-1zM22 71h1v1h-1zM34 71h1v1h-1zM37 71h1v1h-1zM40 71h1v1h-1zM43 71h1v1h-1zM46 71h1v1h-1zM49 71h1v1h-1zM55 71h1v1h-1zM58 71h1v1h-1zM61 71h1v1h-1zM64 71h1v1h-1zM70 71h1v1h-1zM73 71h1v1h-1zM76 71h1v1h-1zM79 71h1v1h-1zM82 71h1v1h-1zM3 72h1v1h-1zM6 72h1v1h-1zM9 72h1v1h-1zM12 72h1v1h-1zM15 72h1v1h-1zM18 72h1v1h-1zM21 72h1v1h-1zM24 72h1v1h-1zM27 72h1v1h-1zM30 72h1v1h-1zM33 72h1v1h-1zM36 72h1v1h-1zM39 72h1v1h-1zM45 72h1v1h-1zM48 72h1v1h-1zM51 72h1v1h-1zM54 72h1v1h-1zM57 72h1v1h-1zM60 72h1v1h-1zM63 72h1v1h-1zM66 72h1v1h-1zM69 72h1v1h-1zM72 72h1v1h-1zM75 72h1v1h-1zM78 72h1v1h-1zM81 72h1v1h-1zM2 73h1v1h-1zM5 73h1v1h-1zM8 73h1v1h-1zM11 73h1v1h-1zM17 73h1v1h-1zM20 73h1v1h-1zM23 73h1v1h-1zM26 73h1v1h-1zM32 73h1v1h-1zM38 73h1v1h-1zM41 73h1v1h-1zM47 73h1v1h-1zM50 73h1v1h-1zM53 73h1v1h-1zM56 73h1v1h-1zM62 73h1v1h-1zM65 73h1v1h-1zM74 73h1v1h-1zM77 73h1v1h-1zM80 73h1v1h-1zM83 73h1v1h-1zM1 74h1v1h-1zM10 74h1v1h-1zM22 74h1v1h-1zM28 74h1v1h-1zM34 74h1v1h-1zM40 74h1v1h-1zM46 74h1v1h-1zM49 74h1v1h-1zM55 74h1v1h-1zM58 74h1v1h-1zM67 74h1v1h-1zM70 74h1v1h-1zM73 74h1v1h-1zM76 74h1v1h-1zM82 74h1v1h-1zM0 75h1v1h-1zM3 75h1v1h-1zM6 75h1v1h-1zM9 75h1v1h-1zM18 75h1v1h-1zM21 75h1v1h-1zM24 75h1v1h-1zM27 75h1v1h-1zM30 75h1v1h-1zM33 75h1v1h-1zM36 75h1v1h-1zM39 75h1v1h-1zM45 75h1v1h-1zM57 75h1v1h-1zM60 75h1v1h-1zM66 75h1v1h-1zM69 75h1v1h-1zM72 75h1v1h-1zM75 75h1v1h-1zM2 76h1v1h-1zM8 76h1v1h-1zM11 76h1v1h-1zM14 76h1v1h-1zM17 76h1v1h-1zM20 76h1v1h-1zM23 76h1v1h-1zM26 76h1v1h-1zM32 76h1v1h-1zM35 76h1v1h-1zM38 76h1v1h-1zM41 76h1v1h-1zM44 76h1v1h-1zM47 76h1v1h-1zM50 76h1v1h-1zM59 76h1v1h-1zM62 76h1v1h-1zM65 76h1v1h-1zM71 76h1v1h-1zM74 76h1v1h-1zM80 76h1v1h-1zM83 76h1v1h-1zM7 77h1v1h-1zM10 77h1v1h-1zM16 77h1v1h-1zM28 77h1v1h-1zM31 77h1v1h-1zM34 77h1v1h-1zM37 77h1v1h-1zM40 77h1v1h-1zM43 77h1v1h-1zM46 77h1v1h-1zM49 77h1v1h-1zM52 77h1v1h-1zM55 77h1v1h-1zM61 77h1v1h-1zM64 77h1v1h-1zM67 77h1v1h-1zM73 77h1v1h-1zM76 77h1v1h-1zM79 77h1v1h-1zM82 77h1v1h-1zM3 78h1v1h-1zM6 78h1v1h-1zM9 78h1v1h-1zM12 78h1v1h-1zM15 78h1v1h-1zM18 78h1v1h-1zM21 78h1v1h-1zM24 78h1v1h-1zM30 78h1v1h-1zM33 78h1v1h-1zM36 78h1v1h-1zM39 78h1v1h-1zM45 78h1v1h-1zM48 78h1v1h-1zM51 78h1v1h-1zM54 78h1v1h-1zM60 78h1v1h-1zM66 78h1v1h-1zM69 78h1v1h-1zM75 78h1v1h-1zM78 78h1v1h-1zM81 78h1v1h-1zM2 79h1v1h-1zM5 79h1v1h-1zM8 79h1v1h-1zM14 79h1v1h-1zM17 79h1v1h-1zM20 79h1v1h-1zM23 79h1v1h-1zM26 79h1v1h-1zM32 79h1v1h-1zM38 79h1v1h-1zM41 79h1v1h-1zM44 79h1v1h-1zM47 79h1v1h-1zM56 79h1v1h-1zM65 79h1v1h-1zM68 79h1v1h-1zM74 79h1v1h-1zM80 79h1v1h-1zM83 79h1v1h-1zM1 80h1v1h-1zM4 80h1v1h-1zM7 80h1v1h-1zM13 80h1v1h-1zM19 80h1v1h-1zM22 80h1v1h-1zM25 80h1v1h-1zM28 80h1v1h-1zM34 80h1v1h-1zM37 80h1v1h-1zM40 80h1v1h-1zM43 80h1v1h-1zM46 80h1v1h-1zM49 80h1v1h-1zM52 80h1v1h-1zM55 80h1v1h-1zM61 80h1v1h-1zM64 80h1v1h-1zM67 80h1v1h-1zM70 80h1v1h-1zM73 80h1v1h-1zM76 80h1v1h-1zM79 80h1v1h-1zM82 80h1v1h-1zM0 81h1v1h-1zM3 81h1v1h-1zM6 81h1v1h-1zM9 81h1v1h-1zM15 81h1v1h-1zM18 81h1v1h-1zM27 81h1v1h-1zM30 81h1v1h-1zM36 81h1v1h-1zM42 81h1v1h-1zM48 81h1v1h-1zM51 81h1v1h-1zM54 81h1v1h-1zM57 81h1v1h-1zM60 81h1v1h-1zM63 81h1v1h-1zM69 81h1v1h-1zM72 81h1v1h-1zM75 81h1v1h-1zM78 81h1v1h-1zM81 81h1v1h-1zM5 82h1v1h-1zM8 82h1v1h-1zM11 82h1v1h-1zM14 82h1v1h-1zM20 82h1v1h-1zM23 82h1v1h-1zM26 82h1v1h-1zM29 82h1v1h-1zM32 82h1v1h-1zM35 82h1v1h-1zM38 82h1v1h-1zM44 82h1v1h-1zM47 82h1v1h-1zM50 82h1v1h-1zM53 82h1v1h-1zM56 82h1v1h-1zM59 82h1v1h-1zM62 82h1v1h-1zM65 82h1v1h-1zM68 82h1v1h-1zM71 82h1v1h-1zM74 82h1v1h-1zM77 82h1v1h-1zM80 82h1v1h-1zM83 82h1v1h-1zM13 83h1v1h-1zM16 83h1v1h-1zM19 83h1v1h-1zM22 83h1v1h-1zM25 83h1v1h-1zM28 83h1v1h-1zM31 83h1v1h-1zM34 83h1v1h-1zM37 83h1v1h-1zM40 83h1v1h-1zM46 83h1v1h-1zM49 83h1v1h-1zM52 83h1v1h-1zM55 83h1v1h-1zM64 83h1v1h-1zM67 83h1v1h-1zM70 83h1v1h-1zM73 83h1v1h-1zM76 83h1v1h-1zM79 83h1v1h-1zM82 83h1v1h-1z" fill="#f4f4f4"/></pattern></defs><rect width="2189" height="1051" fill="url(#tex)"/></svg>
<div style="position:absolute;left:0px;top:0px;width:2189px;height:182px;background:#16a085"></div>
<div style="position:absolute;left:0px;top:0px;width:2189px;height:3px;background:#2b2a33"></div>
<div style="position:absolute;left:0px;top:2px;width:2189px;height:1px;background:#10080c"></div>
<div style="position:absolute;left:0px;top:3px;width:2189px;height:1px;background:#1aae90"></div>
<div style="position:absolute;left:681px;top:182px;width:1182px;height:1051px;background:#fff"></div>
<div style="position:absolute;left:544px;top:32px;width:89px;height:60px;background:#1abc9c;border:1px solid #12846d;border-right-color:#0f6e5c;box-sizing:border-box;box-shadow:inset 3px 3px 0 rgba(255,255,255,.55),2.5px 1px 0 #0f241f"></div>
<div style="position:absolute;left:641px;top:32px;width:41px;height:60px;background:#1abc9c;border:1px solid #12846d;border-right-color:#0f6e5c;box-sizing:border-box;box-shadow:inset 3px 3px 0 rgba(255,255,255,.55),2.5px 1px 0 #0f241f"></div>
<div style="position:absolute;left:1856.4px;top:30px;width:133px;height:133px;border-radius:50%;background:#1d1c1d;box-shadow:0 0 7px 1px rgba(0,0,0,.55)"></div>
<div style="position:absolute;left:1861.1px;top:34.7px;width:123.6px;height:123.6px;border-radius:50%;background:#17a085"></div>
<div style="position:absolute;left:1865px;top:38.6px;width:115.8px;height:115.8px;border-radius:50%;background:linear-gradient(#242f36,#1b2328);box-shadow:0 0 0 0.6px #0e5f50"></div>
<svg style="position:absolute;left:1903px;top:40px;" width="42" height="40" viewBox="0 0 42 40"><path d="M20.5 2 L34.5 34 L6.5 34 Z" fill="#303e46"/><path d="M20.5 2 L20.9 6 L10.5 34 L6.5 34 Z" fill="#98a1a8"/><path d="M9.8 26.5 L16 31 L17 34 L8 34 Z" fill="#5b676f"/><path d="M9.5 26 L17.5 32" stroke="#151c20" stroke-width="1.2"/></svg>
<div style="position:absolute;left:696px;top:1090px;width:1152px;height:26px;background:#f9f9f9;border:1px solid #b9b9b9;border-radius:0 0 4px 4px;box-sizing:border-box"></div>
<div style="position:absolute;left:707px;top:1090px;width:910px;height:17px;background:#fff;border:1px solid #b8b8c0;box-sizing:border-box"></div>
<svg style="position:absolute;left:1599px;top:1100px;" width="16" height="8" viewBox="0 0 16 8"><path d="M1 7 L5 1 M5.5 7 L9.5 1 M10 7 L14 1" stroke="#555" stroke-width="1.3"/></svg>
<div style="position:absolute;left:696px;top:1122px;width:1152px;height:42px;background:#f9f9f9;border:1px solid #b9b9b9;border-radius:4px;box-sizing:border-box"></div>
<div style="position:absolute;left:1137px;top:1132px;width:110px;height:21px;background:#efefef;border:1px solid #6b6b6b;box-sizing:border-box"></div>
<div class="t" style="left:1139.91px;top:1143px;font-family:'DejaVu Sans',sans-serif;font-size:12px;color:#111;transform:scaleX(0.9519);transform-origin:0 0;">Entwurf speichern</div>
<div style="position:absolute;left:1255px;top:1132px;width:68px;height:21px;background:#efefef;border:1px solid #6b6b6b;box-sizing:border-box"></div>
<div class="t" style="left:1258.95px;top:1143px;font-family:'DejaVu Sans',sans-serif;font-size:12px;color:#111;font-weight:bold;transform:scaleX(0.9806);transform-origin:0 0;">Vorschau</div>
<div style="position:absolute;left:1331px;top:1132px;width:72px;height:21px;background:#efefef;border:1px solid #6b6b6b;box-sizing:border-box"></div>
<div class="t" style="left:1334.95px;top:1143px;font-family:'DejaVu Sans',sans-serif;font-size:12px;color:#111;font-weight:bold;transform:scaleX(0.9693);transform-origin:0 0;">Absenden</div>
<div style="position:absolute;left:704px;top:1185px;width:63px;height:27px;background:linear-gradient(#fdfdfd,#e4e4e4);border:1px solid #c4c4c4;border-bottom:none;border-radius:5px 5px 0 0;box-sizing:border-box;box-shadow:inset 0 0 3px rgba(0,0,0,.15)"></div>
<div style="position:absolute;left:768px;top:1185px;width:100px;height:27px;background:#fdfdfd;border:1px solid #b9b9b9;border-bottom:none;border-radius:5px 5px 0 0;box-sizing:border-box"></div>
<div class="t" style="left:709.04px;top:1199px;font-family:'DejaVu Sans',sans-serif;font-size:11px;color:#16a085;font-weight:bold;transform:scaleX(0.9262);transform-origin:0 0;">Optionen</div>
<div class="t" style="left:777.77px;top:1199px;font-family:'DejaVu Sans',sans-serif;font-size:11px;color:#16a085;font-weight:bold;transform:scaleX(0.9330);transform-origin:0 0;">Dateianhänge</div>
<div style="position:absolute;left:696px;top:1211px;width:1152px;height:40px;background:#f9f9f9;border:1px solid #b9b9b9;border-radius:4px;box-sizing:border-box"></div>
<div style="position:absolute;left:708px;top:1218px;width:13px;height:13px;background:#fff;border:2px solid #8b8794;border-radius:2.5px;box-sizing:border-box"></div>
<div class="t" style="left:724.39px;top:1224px;font-family:'DejaVu Sans',sans-serif;font-size:12px;color:#333;transform:scaleX(0.9654);transform-origin:0 0;">BBCode ausschalten</div>
<div class="abs" style="left:190px;top:73px;width:1904px;height:1028px;background:#fff;box-shadow:0 0 0 1px rgba(70,75,80,.38),0 3px 12px rgba(0,0,0,.3)"></div>
<svg style="position:absolute;left:198px;top:79px;" width="16" height="15" viewBox="0 0 16 15"><rect x="0" y="0" width="16" height="5" fill="#d22856"/><rect x="0" y="5" width="16" height="5" fill="#4b50c0"/><rect x="0" y="10" width="16" height="5" fill="#1f9c40"/><rect x="0" y="4.2" width="16" height="0.9" fill="#7a1030"/><rect x="0" y="9.2" width="16" height="0.9" fill="#20207a"/><rect x="0" y="14.2" width="16" height="0.8" fill="#0a4a18"/><rect x="5" y="0" width="0.9" height="15" fill="#000" opacity=".35"/><rect x="10.2" y="0" width="0.9" height="15" fill="#000" opacity=".35"/><rect x="5.9" y="0" width="4.3" height="15" fill="#f07a1c"/><rect x="5" y="5" width="6.2" height="5" rx="0.8" fill="#fff"/><path d="M6.2 4.5 h3.7 v4 l-0.6 0.8 l-0.5 -0.8 v-2.3 h-1.5 v2.3 l-0.5 0.8 l-0.6 -0.8 z" fill="#f06a18"/><path d="M6.2 7.5 l0.6 1.8 l0.5 -1.8 z M8.8 7.5 l0.5 1.8 l0.6 -1.8 z" fill="#d80000"/><rect x="1" y="1" width="1.1" height="2.8" fill="#ffe21a"/><rect x="1" y="6" width="1.1" height="2.8" fill="#ffd21a"/><rect x="1" y="11" width="1.1" height="2.8" fill="#ffe21a"/></svg>
<div class="t" style="left:218.48px;top:88px;font-family:'Liberation Sans',sans-serif;font-size:12px;color:#9a9a9a;transform:scaleX(0.9639);transform-origin:0 0;">Dieser PC (Nicht lizenzierte Testversion)</div>
<svg style="position:absolute;left:1970px;top:78px;" width="120" height="20" viewBox="0 0 120 20"><path d="M5 9.5 h10" stroke="#8a8a8a" stroke-width="1"/><rect x="50.5" y="4.5" width="9" height="9" fill="none" stroke="#8a8a8a" stroke-width="1"/><path d="M96 4 l10 10 M106 4 l-10 10" stroke="#8a8a8a" stroke-width="1"/></svg>
<div class="t" style="left:196.45px;top:113px;font-family:'Liberation Sans',sans-serif;font-size:12px;color:#6d6d6d;transform:scaleX(1.0001);transform-origin:0 0;">Datei</div>
<div class="t" style="left:237.46px;top:113px;font-family:'Liberation Sans',sans-serif;font-size:12px;color:#6d6d6d;transform:scaleX(0.9866);transform-origin:0 0;">Befehle</div>
<div class="t" style="left:290.41px;top:113px;font-family:'Liberation Sans',sans-serif;font-size:12px;color:#6d6d6d;transform:scaleX(0.9401);transform-origin:0 0;">Extras</div>
<div class="t" style="left:335.35px;top:113px;font-family:'Liberation Sans',sans-serif;font-size:12px;color:#6d6d6d;transform:scaleX(1.0000);transform-origin:0 0;">Favoriten</div>
<div class="t" style="left:398.63px;top:113px;font-family:'Liberation Sans',sans-serif;font-size:12px;color:#6d6d6d;transform:scaleX(1.0426);transform-origin:0 0;">Optionen</div>
<div class="t" style="left:462.15px;top:113px;font-family:'Liberation Sans',sans-serif;font-size:12px;color:#6d6d6d;transform:scaleX(1.1007);transform-origin:0 0;">Hilfe</div>
<div style="position:absolute;left:190px;top:121px;width:1904px;height:2px;background:#f0f0f0"></div>
<div style="position:absolute;left:194px;top:125px;width:2px;height:89px;background:repeating-linear-gradient(#b9b9b9 0 2px,transparent 2px 4px)"></div>
<div style="position:absolute;left:238.5px;top:188px;width:2px;height:26px;background:repeating-linear-gradient(#b9b9b9 0 2px,transparent 2px 4px)"></div>
<svg style="position:absolute;left:220.3px;top:130px;" width="35" height="34" viewBox="0 0 35 34"><rect x="0.8" y="1" width="11.2" height="33" rx="2" fill="url(#gGreen)"/><rect x="11.7" y="0.5" width="11.2" height="33.5" rx="2" fill="url(#gBlue)"/><rect x="22.6" y="1" width="10.8" height="33" rx="2" fill="url(#gRed)"/><rect x="1.8" y="3" width="9" height="2.6" fill="#f5c52c"/><rect x="12.8" y="3" width="9" height="2.6" fill="#f5c52c"/><rect x="23.6" y="3" width="8.8" height="2.6" fill="#f59a2c"/><rect x="0" y="13.2" width="35" height="10.2" rx="1" fill="url(#gBelt)"/><path d="M8 13.2 h3 v10.2 h-3 q-4.5 -5.1 0 -10.2 z" fill="#fbd77a"/><rect x="9.5" y="12.6" width="2.6" height="11.4" fill="#f6b73a"/><rect x="16.2" y="12" width="9" height="12.6" rx="1.2" fill="none" stroke="#ececec" stroke-width="1.9"/><rect x="16.2" y="12" width="9" height="12.6" rx="1.2" fill="none" stroke="#9a9a9a" stroke-width="0.4"/><rect x="20.5" y="17" width="5" height="2.4" rx="1" fill="#f4f4f4"/><circle cx="15.3" cy="18.3" r="0.9" fill="#5a3000"/></svg>
<svg style="position:absolute;left:289px;top:130px;" width="36" height="34" viewBox="0 0 36 34"><path d="M1 6 Q1 1 6 1 L13 1 Q16 1 17.5 4 L19 6.5 L31 6.5 Q35 6.5 35 10.5 L35 29 Q35 33.5 31 33.5 L5 33.5 Q1 33.5 1 29 Z" fill="url(#gFoldB)"/><rect x="3" y="9" width="30" height="10" fill="#ffffff"/><path d="M4 14 h28" stroke="#c9d6e6" stroke-width="3" stroke-dasharray="0.8 3.2"/><path d="M1 20.5 Q1 16 5 16 L31 16 Q35 16 35 20.5 L35 29.5 Q35 34 31 34 L5 34 Q1 34 1 29.5 Z" fill="url(#gFold)"/><rect x="22" y="27" width="9.5" height="3" fill="#e8241c"/></svg>
<svg style="position:absolute;left:354px;top:131px;" width="28" height="32" viewBox="0 0 28 32"><rect x="0.5" y="2" width="27" height="30" rx="2.5" fill="url(#gClip)"/><path d="M3 5.5 h22 v18 q-1 6 -7 6 h-15 z" fill="#f6f6f6"/><path d="M25 23 q-1 6.5 -7 6.5 q5 -1 4 -6 z" fill="#b9b9b9"/><rect x="6.5" y="1" width="15" height="6.5" rx="2" fill="#d6d6d6" stroke="#8a8a8a" stroke-width="1"/><rect x="5" y="10.5" width="6.5" height="6.5" fill="#fff" stroke="#b5b5b5" stroke-width="0.8"/><rect x="5" y="20" width="6.5" height="6.5" fill="#fff" stroke="#b5b5b5" stroke-width="0.8"/><path d="M5.5 13.5 l3 3 l7.5 -7" fill="none" stroke="#1f8a2b" stroke-width="2.3"/><path d="M14 13.5 h8 M14 16.5 h6 M14 22 h8 M14 24.5 h5" stroke="#b58a8a" stroke-width="0.8"/></svg>
<svg style="position:absolute;left:405px;top:131px;" width="42" height="33" viewBox="0 0 42 33"><path d="M0.5 2 L20 2 L21 3.5 L22 2 L41.5 2 L41.5 31.5 L23 31.5 L21 32.5 L19 31.5 L0.5 31.5 Z" fill="#1b9a2c"/><path d="M2.5 3.5 Q12 1.5 20.5 4.5 L20.5 30.5 Q12 27.5 2.5 29.5 Z" fill="url(#gPage)"/><path d="M39.5 3.5 Q30 1.5 21.5 4.5 L21.5 30.5 Q30 27.5 39.5 29.5 Z" fill="url(#gPage2)"/><path d="M5 7.5 h12 M5 10 h12 M5 12.5 h12 M5 15 h12 M5 17.5 h12 M5 20 h12 M5 22.5 h12 M5 25 h12 M25 11 h12 M25 13.5 h12 M25 16 h12 M25 18.5 h12 M25 21 h12 M25 23.5 h12 M25 26 h12" stroke="#c8c8c8" stroke-width="0.8"/><path d="M24 2.5 h5 v9.5 l-2.5 -2 l-2.5 2 z" fill="#d4222a"/></svg>
<svg style="position:absolute;left:468px;top:129px;" width="30" height="36" viewBox="0 0 30 36"><rect x="9" y="1" width="12.5" height="5" rx="1" fill="none" stroke="#8fa3bb" stroke-width="1.6"/><rect x="0.5" y="5" width="29" height="5" rx="2" fill="url(#gCan)" stroke="#8398b0" stroke-width="0.6"/><path d="M2.5 10 L27.5 10 L26 33 Q25.8 35 24 35 L6 35 Q4.2 35 4 33 Z" fill="url(#gCan)"/><path d="M8 12 v20 M12.5 12 v20 M17.5 12 v20 M22 12 v20" stroke="#6f86a3" stroke-width="1.5"/><path d="M10 12 v20 M15 12 v20 M19.8 12 v20" stroke="#f2f5f9" stroke-width="1.2"/></svg>
<svg style="position:absolute;left:519px;top:128px;" width="38" height="37" viewBox="0 0 38 37"><path d="M25 24 L34.5 33" stroke="#7a8694" stroke-width="5.5" stroke-linecap="round"/><path d="M25 24 L34 32.5" stroke="#b9c2cc" stroke-width="2" stroke-linecap="round"/><circle cx="15.5" cy="16" r="14.5" fill="#e9eef4" stroke="#c3ccd6" stroke-width="1"/><circle cx="15.5" cy="16" r="12" fill="url(#gLens)"/><ellipse cx="15.5" cy="10.5" rx="8" ry="4" fill="#ffffff" opacity="0.25"/></svg>
<svg style="position:absolute;left:578px;top:130px;" width="37" height="34" viewBox="0 0 37 34"><path d="M15 13 L34.5 31.5" stroke="#222" stroke-width="3.4" stroke-linecap="round"/><path d="M15 13 L19 17" stroke="#a9a9a9" stroke-width="3.4" stroke-linecap="round"/><polygon points="6.50,9.00 7.95,12.50 11.73,12.80 8.85,15.26 9.73,18.95 6.50,16.98 3.27,18.95 4.15,15.26 1.27,12.80 5.05,12.50" fill="#d9ffc0" stroke="#55d020" stroke-width="1"/><polygon points="12.70,0.40 13.84,3.13 16.79,3.37 14.54,5.30 15.23,8.18 12.70,6.63 10.17,8.18 10.86,5.30 8.61,3.37 11.56,3.13" fill="#e6fbff" stroke="#22c8f0" stroke-width="1"/><polygon points="23.00,0.50 23.74,2.28 25.66,2.43 24.20,3.69 24.65,5.57 23.00,4.56 21.35,5.57 21.80,3.69 20.34,2.43 22.26,2.28" fill="#fff" stroke="#f08a9a" stroke-width="1"/></svg>
<svg style="position:absolute;left:634px;top:130px;" width="34" height="34" viewBox="0 0 34 34"><circle cx="17" cy="17" r="16.8" fill="#dfe6ee"/><circle cx="17" cy="17" r="14.2" fill="url(#gInfo)" stroke="#2747cf" stroke-width="1.3"/><circle cx="17" cy="10" r="2.7" fill="#3f78e8"/><path d="M13.2 15 h6.6 v9.3 h2 v2.2 h-9.6 v-2.2 h2.2 v-7 h-1.2 z" fill="#2a4fe0"/></svg>
<div style="position:absolute;left:681px;top:127px;width:1px;height:53px;background:#8c8c8c"></div>
<svg style="position:absolute;left:707px;top:131px;" width="26" height="32" viewBox="0 0 26 32"><rect x="0.3" y="0.3" width="25.4" height="31.4" fill="#2db347" stroke="#1f9a38" stroke-width="0.6"/><path d="M25.7 12 L25.7 31.7 L10 31.7 Z" fill="#1f9e3a"/><rect x="3.8" y="5" width="18" height="2.6" fill="#f59a1a"/><rect x="3.8" y="5" width="18" height="0.8" fill="#fbd34a"/><g transform="rotate(35 17 22)"><rect x="11" y="17" width="12" height="4" rx="0.8" fill="#d9c79a"/><rect x="11" y="23" width="12" height="4" rx="0.8" fill="#cdb98a"/></g></svg>
<div class="t" style="left:205.52px;top:173px;font-family:'Liberation Sans',sans-serif;font-size:12px;color:#000;transform:scaleX(1.0359);transform-origin:0 0;">Hinzufügen</div>
<div class="t" style="left:278.35px;top:173px;font-family:'Liberation Sans',sans-serif;font-size:12px;color:#000;transform:scaleX(0.9991);transform-origin:0 0;">Entp. nach</div>
<div class="t" style="left:350.96px;top:173px;font-family:'Liberation Sans',sans-serif;font-size:12px;color:#000;transform:scaleX(0.9408);transform-origin:0 0;">Testen</div>
<div class="t" style="left:401.0px;top:173px;font-family:'Liberation Sans',sans-serif;font-size:12px;color:#000;transform:scaleX(0.9865);transform-origin:0 0;">Anzeigen</div>
<div class="t" style="left:460.56px;top:173px;font-family:'Liberation Sans',sans-serif;font-size:12px;color:#000;transform:scaleX(0.9921);transform-origin:0 0;">Löschen</div>
<div class="t" style="left:518.02px;top:173px;font-family:'Liberation Sans',sans-serif;font-size:12px;color:#000;transform:scaleX(0.9613);transform-origin:0 0;">Suchen</div>
<div class="t" style="left:571.4px;top:173px;font-family:'Liberation Sans',sans-serif;font-size:12px;color:#000;transform:scaleX(0.9547);transform-origin:0 0;">Assistent</div>
<div class="t" style="left:639.32px;top:173px;font-family:'Liberation Sans',sans-serif;font-size:12px;color:#000;transform:scaleX(1.0736);transform-origin:0 0;">Info</div>
<div class="t" style="left:691.09px;top:173px;font-family:'Liberation Sans',sans-serif;font-size:12px;color:#000;transform:scaleX(0.9611);transform-origin:0 0;">Reparieren</div>
<svg style="position:absolute;left:205px;top:192.5px;" width="14" height="14" viewBox="0 0 14 14"><path d="M7 12.3 V2.2 M2.3 6.6 L7 1.9 L11.7 6.6" fill="none" stroke="#787878" stroke-width="1.6"/></svg>
<div style="position:absolute;left:245px;top:188px;width:1849px;height:24px;border:1px solid #7a7a7a;box-sizing:border-box;background:#fff"></div>
<svg style="position:absolute;left:248px;top:193px;" width="16" height="15" viewBox="0 0 16 15"><rect x="0.5" y="0.5" width="15" height="10.5" fill="#4cc2f1" stroke="#2a90c8" stroke-width="1"/><path d="M1 10 L15 1 L15 10.5 Z" fill="#2fa8e6" opacity="0.6"/><rect x="6" y="11.5" width="4" height="1.5" fill="#9aa8b5"/><rect x="2" y="13.5" width="12" height="1.2" fill="#7ea4c8"/></svg>
<div class="t" style="left:268.52px;top:201px;font-family:'Liberation Sans',sans-serif;font-size:12px;color:#000;transform:scaleX(0.9266);transform-origin:0 0;">Dieser PC</div>
<svg style="position:absolute;left:2079px;top:196px;" width="12" height="10" viewBox="0 0 12 10"><path d="M1.5 2.5 L6 7 L10.5 2.5" fill="none" stroke="#444" stroke-width="1.3"/></svg>
<div style="position:absolute;left:191px;top:214px;width:1902px;height:1px;background:#e3e3e3"></div>
<div style="position:absolute;left:191px;top:215px;width:1902px;height:1px;background:#828790"></div>
<div style="position:absolute;left:191px;top:216px;width:1902px;height:861px;background:#fff"></div>
<div style="position:absolute;left:191px;top:216px;width:121px;height:861px;background:#f7f7f7"></div>
<div style="position:absolute;left:191px;top:216px;width:421px;height:22px;background:linear-gradient(#fff 30%,#ececec)"></div>
<div style="position:absolute;left:191px;top:215px;width:1px;height:862px;background:#828790"></div>
<div style="position:absolute;left:2093px;top:215px;width:1px;height:862px;background:#828790"></div>
<div style="position:absolute;left:311px;top:216px;width:1px;height:22px;background:#e5e5e5"></div>
<div style="position:absolute;left:391px;top:216px;width:1px;height:22px;background:#e5e5e5"></div>
<div style="position:absolute;left:511px;top:216px;width:1px;height:22px;background:#e5e5e5"></div>
<div style="position:absolute;left:611px;top:216px;width:1px;height:22px;background:#e5e5e5"></div>
<svg style="position:absolute;left:248px;top:217px;" width="10" height="6" viewBox="0 0 10 6"><path d="M1 5 L5 1 L9 5" fill="none" stroke="#666" stroke-width="1"/></svg>
<div class="t" style="left:197.52px;top:229px;font-family:'Liberation Sans',sans-serif;font-size:12px;color:#222;transform:scaleX(1.0283);transform-origin:0 0;">Name</div>
<div class="t" style="left:354.03px;top:229px;font-family:'Liberation Sans',sans-serif;font-size:12px;color:#222;transform:scaleX(0.9549);transform-origin:0 0;">Größe</div>
<div class="t" style="left:398.27px;top:229px;font-family:'Liberation Sans',sans-serif;font-size:12px;color:#222;transform:scaleX(0.9400);transform-origin:0 0;">Typ</div>
<div class="t" style="left:517.42px;top:229px;font-family:'Liberation Sans',sans-serif;font-size:12px;color:#222;transform:scaleX(0.9686);transform-origin:0 0;">Geändert</div>
<svg style="position:absolute;left:196px;top:240px;" width="7" height="192" viewBox="0 0 7 192"><rect x="0" y="4.5" width="2.6" height="2.6" fill="#189cf0"/><rect x="3.2" y="4.5" width="4" height="2.6" fill="#189cf0"/><rect x="0" y="7.7" width="2.6" height="2.6" fill="#189cf0"/><rect x="3.2" y="7.7" width="4" height="2.6" fill="#3aa8f0"/><rect x="1.2" y="10.6" width="6" height="5.6" fill="#3b4a5e"/><rect x="2.5" y="28" width="5" height="3" fill="#d4d4d4"/><rect x="1.6" y="31" width="6" height="4.6" fill="#3a3a3a"/><rect x="2.5" y="47" width="5" height="3" fill="#d4d4d4"/><rect x="1.6" y="50" width="6" height="4.4" fill="#3a3a3a"/><rect x="0.5" y="60" width="7" height="14" fill="#9adcd8"/><path d="M0 60 L7 60 L7 65.5 Z M0 74 L7 69 L7 74.5 Z" fill="#38b8b4"/><rect x="0.5" y="80.5" width="7" height="11" fill="#fff" stroke="#777"/><rect x="2" y="82" width="6" height="4" fill="#4a8ae0"/><rect x="2" y="86" width="6" height="4" fill="#3f6a4a"/><rect x="0" y="99" width="7" height="11.7" fill="#1e88e5"/><rect x="1" y="108.6" width="1.2" height="1.2" fill="#fff"/><rect x="2.5" y="116.5" width="5" height="15" fill="#fff" stroke="#8a8a8a"/><path d="M4 122h3M4 124.5h3M4 127h3M4 129.5h3" stroke="#777" stroke-width="0.8"/><path d="M5 119 l2 2" stroke="#1e70c8" stroke-width="1.2"/><path d="M0 142.7 L7 142.7 L7 149.6 Z" fill="#1e78d0"/><rect x="5.2" y="135" width="2" height="8" fill="#1e78d0"/><circle cx="5" cy="167.6" r="2.7" fill="#1e90f0"/><rect x="1.4" y="174.3" width="6" height="14.2" fill="#222"/><rect x="3.2" y="175.5" width="4" height="5.5" fill="#4a68c0"/><rect x="3.2" y="182" width="4" height="5.5" fill="#3a70c8"/><path d="M2.1 175.5v12" stroke="#fff" stroke-width="0.7" stroke-dasharray="0.8 0.9"/></svg>
<div style="position:absolute;left:191px;top:1076px;width:1902px;height:1px;background:#828790"></div>
<div style="position:absolute;left:190px;top:1077px;width:1904px;height:1px;background:#fafafa"></div>
<div style="position:absolute;left:190px;top:1078px;width:1904px;height:23px;background:#f0f0f0"></div>
<div style="position:absolute;left:190px;top:1078px;width:1904px;height:1px;background:#e0e0e0"></div>
<div style="position:absolute;left:194px;top:1085px;width:15px;height:8px;background:#37444c;border:1.5px solid #a9c6d8;border-radius:2.5px;box-sizing:border-box"></div>
<svg style="position:absolute;left:213px;top:1084px;" width="17" height="11" viewBox="0 0 17 11"><path d="M0.5 4 h8 v3 h-2 v1.5 h-2 v-1.5 h-1.5 v1 h-2.5 z" fill="#5a6870"/><circle cx="11.5" cy="5" r="3.6" fill="#fff" stroke="#5a646c" stroke-width="1.6"/><circle cx="11.5" cy="5" r="1.2" fill="#c9d2d8"/></svg>
<div style="position:absolute;left:232px;top:1079px;width:1px;height:21px;background:#d0d0d0"></div>
<div style="position:absolute;left:1162px;top:1079px;width:1px;height:21px;background:#d0d0d0"></div>
<div class="t" style="left:1165.75px;top:1091px;font-family:'Liberation Sans',sans-serif;font-size:12px;color:#000;transform:scaleX(0.9554);transform-origin:0 0;">Insgesamt 10 Verzeichnisse</div>
<svg style="position:absolute;left:2082px;top:1089px;shape-rendering:crispEdges" width="12" height="12" viewBox="0 0 12 12"><path d="M8 2h2v2h-2z M5 5h2v2h-2z M8 5h2v2h-2z M2 8h2v2h-2z M5 8h2v2h-2z M8 8h2v2h-2z" fill="#a9a9a9"/></svg>
<div class="abs" style="left:203px;top:234px;width:1521px;height:810px;background:#fff;box-shadow:0 0 0 1px #6e6e6e,0 4px 19px rgba(0,0,0,.32)"></div>
<svg style="position:absolute;left:211px;top:241px;" width="16" height="16" viewBox="0 0 16 16"><rect x="3.5" y="1.5" width="12" height="9" fill="#e8f4fb" stroke="#6a7a86" stroke-width="1"/><path d="M4.5 7 l2.5 -3 l2 3.5 l2 -2.5 l3.5 1" fill="none" stroke="#2a86c8" stroke-width="1.1"/><rect x="8" y="11" width="3" height="2" fill="#8a959e"/><rect x="5.5" y="13" width="8" height="1.3" fill="#a0aab2"/><rect x="0.3" y="5" width="2" height="9" fill="#9aa4ad"/><rect x="0.6" y="6" width="1.3" height="1.5" fill="#2ab02a"/></svg>
<div class="t" style="left:232.46px;top:249px;font-family:'Liberation Sans',sans-serif;font-size:12px;color:#000;transform:scaleX(0.9684);transform-origin:0 0;">Task-Manager</div>
<svg style="position:absolute;left:1600px;top:238px;" width="115" height="20" viewBox="0 0 115 20"><path d="M5 10.5 h10" stroke="#000" stroke-width="1"/><rect x="50.5" y="5.5" width="9" height="9" fill="none" stroke="#000" stroke-width="1"/><path d="M96 5 l10 10 M106 5 l-10 10" stroke="#000" stroke-width="1"/></svg>
<div class="t" style="left:209.66px;top:274px;font-family:'Liberation Sans',sans-serif;font-size:12px;color:#000;transform:scaleX(0.9887);transform-origin:0 0;">Datei</div>
<div class="t" style="left:251.33px;top:274px;font-family:'Liberation Sans',sans-serif;font-size:12px;color:#000;transform:scaleX(1.0300);transform-origin:0 0;">Optionen</div>
<div class="t" style="left:315.5px;top:274px;font-family:'Liberation Sans',sans-serif;font-size:12px;color:#000;transform:scaleX(1.0110);transform-origin:0 0;">Ansicht</div>
<div style="position:absolute;left:204px;top:282px;width:1520px;height:2px;background:#f0f0f0"></div>
<div style="position:absolute;left:204px;top:308px;width:1520px;height:1px;background:#d9d9d9"></div>
<div style="position:absolute;left:205px;top:288px;width:56px;height:21px;background:#f0f0f0;border:1px solid #d9d9d9;box-sizing:border-box"></div>
<div class="t" style="left:210.22px;top:299px;font-family:'Liberation Sans',sans-serif;font-size:12px;color:#000;transform:scaleX(0.9249);transform-origin:0 0;">Prozesse</div>
<div style="position:absolute;left:320px;top:288px;width:74px;height:21px;background:#f0f0f0;border:1px solid #d9d9d9;box-sizing:border-box"></div>
<div class="t" style="left:325.3px;top:299px;font-family:'Liberation Sans',sans-serif;font-size:12px;color:#000;transform:scaleX(0.9925);transform-origin:0 0;">App-Verlauf</div>
<div style="position:absolute;left:393px;top:288px;width:62px;height:21px;background:#f0f0f0;border:1px solid #d9d9d9;box-sizing:border-box"></div>
<div class="t" style="left:400.0px;top:299px;font-family:'Liberation Sans',sans-serif;font-size:12px;color:#000;transform:scaleX(1.0138);transform-origin:0 0;">Autostart</div>
<div style="position:absolute;left:454px;top:288px;width:59px;height:21px;background:#f0f0f0;border:1px solid #d9d9d9;box-sizing:border-box"></div>
<div class="t" style="left:460.07px;top:299px;font-family:'Liberation Sans',sans-serif;font-size:12px;color:#000;transform:scaleX(0.9812);transform-origin:0 0;">Benutzer</div>
<div style="position:absolute;left:512px;top:288px;width:48px;height:21px;background:#f0f0f0;border:1px solid #d9d9d9;box-sizing:border-box"></div>
<div class="t" style="left:518.27px;top:299px;font-family:'Liberation Sans',sans-serif;font-size:12px;color:#000;transform:scaleX(0.9765);transform-origin:0 0;">Details</div>
<div style="position:absolute;left:559px;top:288px;width:50px;height:21px;background:#f0f0f0;border:1px solid #d9d9d9;box-sizing:border-box"></div>
<div class="t" style="left:565.26px;top:299px;font-family:'Liberation Sans',sans-serif;font-size:12px;color:#000;transform:scaleX(0.9869);transform-origin:0 0;">Dienste</div>
<div style="position:absolute;left:260px;top:286px;width:61px;height:23px;background:#fff;border:1px solid #d9d9d9;border-bottom:none;box-sizing:border-box"></div>
<div class="t" style="left:267.23px;top:297px;font-family:'Liberation Sans',sans-serif;font-size:12px;color:#000;transform:scaleX(1.0161);transform-origin:0 0;">Leistung</div>
<div style="position:absolute;left:207px;top:321px;width:204px;height:60px;background:#d9d9d9"></div>
<svg class="abs" style="left:217px;top:331px" width="60" height="40" viewBox="0 0 60 40"><rect x="0.5" y="0.5" width="59" height="39" fill="#fff" stroke="#117dbb" stroke-width="1"/><polygon points="1,39 1.0,35.0 2.0,36.9 3.0,38.1 3.9,38.2 4.9,36.1 5.9,23.1 6.9,4.7 7.9,4.0 8.9,4.0 9.8,3.8 10.8,3.7 11.8,4.2 12.8,3.7 13.8,3.7 14.8,3.9 15.7,11.6 16.7,33.5 17.7,37.6 18.7,37.9 19.7,38.3 20.7,38.1 21.6,38.2 22.6,38.4 23.6,38.4 24.6,38.3 25.6,38.5 26.6,38.5 27.5,38.0 28.5,37.1 29.5,37.0 30.5,38.4 31.5,38.4 32.5,38.4 33.4,38.1 34.4,33.8 35.4,15.1 36.4,4.4 37.4,4.4 38.4,4.2 39.3,4.0 40.3,3.8 41.3,4.0 42.3,4.1 43.3,3.7 44.3,3.7 45.2,4.0 46.2,4.3 47.2,3.9 48.2,3.7 49.2,3.6 50.2,4.0 51.1,4.0 52.1,4.0 53.1,4.5 54.1,4.5 55.1,4.1 56.1,3.8 57.0,4.2 58.0,4.2 59.0,3.9 59,39" fill="#f1f6fa"/><polyline points="1.0,35.0 2.0,36.9 3.0,38.1 3.9,38.2 4.9,36.1 5.9,23.1 6.9,4.7 7.9,4.0 8.9,4.0 9.8,3.8 10.8,3.7 11.8,4.2 12.8,3.7 13.8,3.7 14.8,3.9 15.7,11.6 16.7,33.5 17.7,37.6 18.7,37.9 19.7,38.3 20.7,38.1 21.6,38.2 22.6,38.4 23.6,38.4 24.6,38.3 25.6,38.5 26.6,38.5 27.5,38.0 28.5,37.1 29.5,37.0 30.5,38.4 31.5,38.4 32.5,38.4 33.4,38.1 34.4,33.8 35.4,15.1 36.4,4.4 37.4,4.4 38.4,4.2 39.3,4.0 40.3,3.8 41.3,4.0 42.3,4.1 43.3,3.7 44.3,3.7 45.2,4.0 46.2,4.3 47.2,3.9 48.2,3.7 49.2,3.6 50.2,4.0 51.1,4.0 52.1,4.0 53.1,4.5 54.1,4.5 55.1,4.1 56.1,3.8 57.0,4.2 58.0,4.2 59.0,3.9" fill="none" stroke="#117dbb" stroke-width="1"/></svg>
<svg class="abs" style="left:217px;top:391px" width="60" height="40" viewBox="0 0 60 40"><rect x="0.5" y="0.5" width="59" height="39" fill="#fff" stroke="#8b12ae" stroke-width="1"/><polygon points="0.5,39.5 0.5,28 5,28 6,27 16,27 17,28 35,28 36,27 38,28 59.5,28 59.5,39.5" fill="#f4f2f4" stroke="#8b12ae" stroke-width="1"/></svg>
<svg class="abs" style="left:217px;top:451px" width="60" height="46" viewBox="0 0 60 46"><rect x="0.5" y="0.5" width="59" height="45" fill="#fff" stroke="#4da60c" stroke-width="1"/></svg>
<svg class="abs" style="left:217px;top:517px" width="60" height="46" viewBox="0 0 60 46"><rect x="0.5" y="0.5" width="59" height="45" fill="#fff" stroke="#4da60c" stroke-width="1"/></svg>
<svg class="abs" style="left:217px;top:583px" width="60" height="46" viewBox="0 0 60 46"><rect x="0.5" y="0.5" width="59" height="45" fill="#fff" stroke="#4da60c" stroke-width="1"/></svg>
<svg class="abs" style="left:217px;top:649px" width="60" height="46" viewBox="0 0 60 46"><rect x="0.5" y="0.5" width="59" height="45" fill="#fff" stroke="#4da60c" stroke-width="1"/></svg>
<svg class="abs" style="left:217px;top:715px" width="60" height="46" viewBox="0 0 60 46"><rect x="0.5" y="0.5" width="59" height="45" fill="#fff" stroke="#a74f01" stroke-width="1"/><polygon points="39,45.5 40.5,41 42,45.5" fill="#d0763a" stroke="#a74f01" stroke-width="0.6"/></svg>
<svg class="abs" style="left:217px;top:781px" width="60" height="46" viewBox="0 0 60 46"><rect x="0.5" y="0.5" width="59" height="45" fill="#fff" stroke="#117dbb" stroke-width="1"/><path d="M29 45 v-1 M36 45 v-1" stroke="#117dbb" stroke-width="1"/></svg>
<div class="t" style="left:286.52px;top:337px;font-family:'Liberation Sans',sans-serif;font-size:15px;color:#000;transform:scaleX(0.9707);transform-origin:0 0;">CPU</div>
<div class="t" style="left:287.18px;top:355px;font-family:'Liberation Sans',sans-serif;font-size:12px;color:#000;transform:scaleX(0.9514);transform-origin:0 0;">95% 3,88 GHz</div>
<div class="t" style="left:287.2px;top:397.5px;font-family:'Liberation Sans',sans-serif;font-size:15px;color:#000;transform:scaleX(1.0299);transform-origin:0 0;">Arbeitsspeicher</div>
<div class="t" style="left:287.47px;top:415px;font-family:'Liberation Sans',sans-serif;font-size:12px;color:#000;transform:scaleX(0.9356);transform-origin:0 0;">4,9/15,9 GB (31%)</div>
<div class="t" style="left:285.99px;top:457.5px;font-family:'Liberation Sans',sans-serif;font-size:15px;color:#000;transform:scaleX(1.0367);transform-origin:0 0;">Datenträger 0 (D:)</div>
<div class="t" style="left:286.74px;top:475px;font-family:'Liberation Sans',sans-serif;font-size:12px;color:#000;transform:scaleX(1.0089);transform-origin:0 0;">HDD</div>
<div class="t" style="left:287.25px;top:490px;font-family:'Liberation Sans',sans-serif;font-size:12px;color:#000;transform:scaleX(0.9894);transform-origin:0 0;">0%</div>
<div class="t" style="left:285.97px;top:523.5px;font-family:'Liberation Sans',sans-serif;font-size:15px;color:#000;transform:scaleX(1.0529);transform-origin:0 0;">Datenträger 1</div>
<div class="t" style="left:287.27px;top:541px;font-family:'Liberation Sans',sans-serif;font-size:12px;color:#000;transform:scaleX(0.8684);transform-origin:0 0;">SSD</div>
<div class="t" style="left:287.25px;top:556px;font-family:'Liberation Sans',sans-serif;font-size:12px;color:#000;transform:scaleX(0.9894);transform-origin:0 0;">0%</div>
<div class="t" style="left:286.0px;top:589.5px;font-family:'Liberation Sans',sans-serif;font-size:15px;color:#000;transform:scaleX(1.0268);transform-origin:0 0;">Datenträger 2 (F:)</div>
<div class="t" style="left:286.74px;top:607px;font-family:'Liberation Sans',sans-serif;font-size:12px;color:#000;transform:scaleX(1.0089);transform-origin:0 0;">HDD</div>
<div class="t" style="left:287.25px;top:622px;font-family:'Liberation Sans',sans-serif;font-size:12px;color:#000;transform:scaleX(0.9894);transform-origin:0 0;">0%</div>
<div class="t" style="left:286.0px;top:655.5px;font-family:'Liberation Sans',sans-serif;font-size:15px;color:#000;transform:scaleX(1.0275);transform-origin:0 0;">Datenträger 3 (C:)</div>
<div class="t" style="left:287.27px;top:673px;font-family:'Liberation Sans',sans-serif;font-size:12px;color:#000;transform:scaleX(0.8684);transform-origin:0 0;">SSD</div>
<div class="t" style="left:286.78px;top:688px;font-family:'Liberation Sans',sans-serif;font-size:12px;color:#000;transform:scaleX(1.0172);transform-origin:0 0;">1%</div>
<div class="t" style="left:285.99px;top:721.5px;font-family:'Liberation Sans',sans-serif;font-size:15px;color:#000;transform:scaleX(1.0363);transform-origin:0 0;">Ethernet</div>
<div class="t" style="left:286.76px;top:739px;font-family:'Liberation Sans',sans-serif;font-size:12px;color:#000;transform:scaleX(0.9880);transform-origin:0 0;">Ethernet 2</div>
<div class="t" style="left:286.51px;top:787.5px;font-family:'Liberation Sans',sans-serif;font-size:15px;color:#000;transform:scaleX(0.9855);transform-origin:0 0;">GPU 0</div>
<div class="t" style="left:287.7px;top:805px;font-family:'Liberation Sans',sans-serif;font-size:12px;color:#000;transform:scaleX(0.9656);transform-origin:0 0;">AMD Radeon VII</div>
<div class="t" style="left:286.81px;top:820px;font-family:'Liberation Sans',sans-serif;font-size:12px;color:#000;transform:scaleX(0.9892);transform-origin:0 0;">1% (29 °C)</div>
<div class="t" style="left:287.18px;top:754px;font-family:'Liberation Sans',sans-serif;font-size:12px;color:#707070;transform:scaleX(0.8706);transform-origin:0 0;">Ges.:</div>
<div class="t" style="left:317.05px;top:754px;font-family:'Liberation Sans',sans-serif;font-size:12px;color:#000;">0</div>
<div class="t" style="left:326.54px;top:754px;font-family:'Liberation Sans',sans-serif;font-size:12px;color:#707070;transform:scaleX(1.0110);transform-origin:0 0;">Empf.:</div>
<div class="t" style="left:364.56px;top:754px;font-family:'Liberation Sans',sans-serif;font-size:12px;color:#000;transform:scaleX(0.9877);transform-origin:0 0;">0 KBit/s</div>
<div style="position:absolute;left:414px;top:331px;width:1px;height:661px;background:#d9d9d9"></div>
<div class="t" style="left:438.64px;top:345px;font-family:'Liberation Sans',sans-serif;font-size:29px;color:#000;transform:scaleX(0.8558);transform-origin:0 0;">CPU</div>
<div class="t" style="left:1403.5px;top:350px;font-family:'Liberation Sans',sans-serif;font-size:16px;color:#000;transform:scaleX(0.9530);transform-origin:0 0;">AMD Ryzen 7 2700X Eight-Core Processor</div>
<div class="t" style="left:443.4px;top:374px;font-family:'Liberation Sans',sans-serif;font-size:11px;color:#707070;transform:scaleX(1.0330);transform-origin:0 0;">Auslastung in 60 Sekunden (%)</div>
<div class="t" style="left:1670.21px;top:374px;font-family:'Liberation Sans',sans-serif;font-size:11px;color:#707070;transform:scaleX(0.9832);transform-origin:0 0;">100%</div>
<svg class="abs" style="left:443px;top:383px" width="310" height="102" viewBox="0 0 310 102"><rect x="0.5" y="0.5" width="309" height="101" fill="#fff" stroke="#117dbb" stroke-width="1"/><g transform="translate(0.5,0.5)"><clipPath id="c27478"><rect x="1.5" y="1.5" width="306" height="98"/></clipPath><polygon clip-path="url(#c27478)" points="0,101 0.0,95.2 5.2,95.2 10.5,95.2 15.7,95.2 20.9,72.7 26.2,7.1 31.4,4.0 36.7,3.0 41.9,6.1 47.1,5.1 52.4,4.0 57.6,5.1 62.8,3.3 68.1,5.3 73.3,7.4 78.6,79.5 83.8,93.0 89.0,95.2 94.3,97.1 99.5,97.1 104.7,96.2 110.0,96.1 115.2,94.0 120.5,97.1 125.7,97.1 130.9,97.1 136.2,97.1 141.4,94.9 146.6,93.0 151.9,97.1 157.1,97.1 162.4,96.2 167.6,96.2 172.8,95.2 178.1,51.5 183.3,7.4 188.5,6.4 193.8,5.2 199.0,5.2 204.3,4.0 209.5,5.2 214.7,4.2 220.0,4.0 225.2,3.0 230.4,3.0 235.7,8.3 240.9,5.6 246.2,4.2 251.4,2.1 256.6,5.2 261.9,5.2 267.1,5.2 272.3,7.3 277.6,9.4 282.8,5.2 288.1,5.2 293.3,5.2 298.5,5.2 303.8,6.4 309.0,4.5 309,101" fill="#f1f6fa"/></g><path d="M2 11.5 H308 M2 21.5 H308 M2 31.5 H308 M2 41.5 H308 M2 51.5 H308 M2 61.5 H308 M2 71.5 H308 M2 81.5 H308 M2 91.5 H308 M52.5 2 V100 M105.5 2 V100 M157.5 2 V100 M209.5 2 V100 M262.5 2 V100 " stroke="#117dbb" stroke-opacity="0.16" stroke-width="1" fill="none"/><g transform="translate(0.5,0.5)"><polyline points="0.0,95.2 5.2,95.2 10.5,95.2 15.7,95.2 20.9,72.7 26.2,7.1 31.4,4.0 36.7,3.0 41.9,6.1 47.1,5.1 52.4,4.0 57.6,5.1 62.8,3.3 68.1,5.3 73.3,7.4 78.6,79.5 83.8,93.0 89.0,95.2 94.3,97.1 99.5,97.1 104.7,96.2 110.0,96.1 115.2,94.0 120.5,97.1 125.7,97.1 130.9,97.1 136.2,97.1 141.4,94.9 146.6,93.0 151.9,97.1 157.1,97.1 162.4,96.2 167.6,96.2 172.8,95.2 178.1,51.5 183.3,7.4 188.5,6.4 193.8,5.2 199.0,5.2 204.3,4.0 209.5,5.2 214.7,4.2 220.0,4.0 225.2,3.0 230.4,3.0 235.7,8.3 240.9,5.6 246.2,4.2 251.4,2.1 256.6,5.2 261.9,5.2 267.1,5.2 272.3,7.3 277.6,9.4 282.8,5.2 288.1,5.2 293.3,5.2 298.5,5.2 303.8,6.4 309.0,4.5" fill="none" stroke="#117dbb" stroke-width="1.1" stroke-linejoin="round"/></g></svg>
<svg class="abs" style="left:757px;top:383px" width="311" height="102" viewBox="0 0 311 102"><rect x="0.5" y="0.5" width="310" height="101" fill="#fff" stroke="#117dbb" stroke-width="1"/><g transform="translate(0.5,0.5)"><clipPath id="c26174"><rect x="1.5" y="1.5" width="307" height="98"/></clipPath><polygon clip-path="url(#c26174)" points="0,101 0.0,94.9 5.3,101.0 10.5,101.0 15.8,101.0 21.0,101.0 26.3,75.8 31.5,10.1 36.8,6.1 42.0,4.0 47.3,5.1 52.5,5.1 57.8,7.1 63.1,4.0 68.3,3.0 73.6,6.1 78.8,8.1 84.1,82.8 89.3,101.0 94.6,101.0 99.8,101.0 105.1,101.0 110.3,101.0 115.6,101.0 120.8,101.0 126.1,101.0 131.4,101.0 136.6,101.0 141.9,101.0 147.1,101.0 152.4,101.0 157.6,101.0 162.9,101.0 168.1,101.0 173.4,101.0 178.6,101.0 183.9,44.4 189.2,9.1 194.4,9.1 199.7,6.1 204.9,2.0 210.2,5.1 215.4,5.1 220.7,8.1 225.9,4.0 231.2,4.0 236.4,5.1 241.7,8.1 246.9,5.1 252.2,4.0 257.5,2.0 262.7,5.1 268.0,6.1 273.2,5.6 278.5,6.1 283.7,8.1 289.0,7.1 294.2,5.6 299.5,7.1 304.7,6.1 310.0,6.1 310,101" fill="#f1f6fa"/></g><path d="M2 11.5 H309 M2 21.5 H309 M2 31.5 H309 M2 41.5 H309 M2 51.5 H309 M2 61.5 H309 M2 71.5 H309 M2 81.5 H309 M2 91.5 H309 M53.5 2 V100 M105.5 2 V100 M158.5 2 V100 M210.5 2 V100 M263.5 2 V100 " stroke="#117dbb" stroke-opacity="0.16" stroke-width="1" fill="none"/><g transform="translate(0.5,0.5)"><polyline points="0.0,94.9 5.3,101.0 10.5,101.0 15.8,101.0 21.0,101.0 26.3,75.8 31.5,10.1 36.8,6.1 42.0,4.0 47.3,5.1 52.5,5.1 57.8,7.1 63.1,4.0 68.3,3.0 73.6,6.1 78.8,8.1 84.1,82.8 89.3,101.0 94.6,101.0 99.8,101.0 105.1,101.0 110.3,101.0 115.6,101.0 120.8,101.0 126.1,101.0 131.4,101.0 136.6,101.0 141.9,101.0 147.1,101.0 152.4,101.0 157.6,101.0 162.9,101.0 168.1,101.0 173.4,101.0 178.6,101.0 183.9,44.4 189.2,9.1 194.4,9.1 199.7,6.1 204.9,2.0 210.2,5.1 215.4,5.1 220.7,8.1 225.9,4.0 231.2,4.0 236.4,5.1 241.7,8.1 246.9,5.1 252.2,4.0 257.5,2.0 262.7,5.1 268.0,6.1 273.2,5.6 278.5,6.1 283.7,8.1 289.0,7.1 294.2,5.6 299.5,7.1 304.7,6.1 310.0,6.1" fill="none" stroke="#117dbb" stroke-width="1.1" stroke-linejoin="round"/></g></svg>
<svg class="abs" style="left:1072px;top:383px" width="311" height="102" viewBox="0 0 311 102"><rect x="0.5" y="0.5" width="310" height="101" fill="#fff" stroke="#117dbb" stroke-width="1"/><g transform="translate(0.5,0.5)"><clipPath id="c48449"><rect x="1.5" y="1.5" width="307" height="98"/></clipPath><polygon clip-path="url(#c48449)" points="0,101 0.0,91.5 5.3,94.6 10.5,92.1 15.8,93.9 21.0,95.4 26.3,67.7 31.5,6.1 36.8,5.1 42.0,5.1 47.3,5.1 52.5,2.3 57.8,3.3 63.1,2.3 68.3,2.3 73.6,1.1 78.8,3.3 84.1,76.3 89.3,84.8 94.6,86.4 99.8,89.2 105.1,81.4 110.3,91.1 115.6,93.9 120.8,96.4 126.1,93.2 131.4,95.3 136.6,95.3 141.9,94.2 147.1,86.4 152.4,90.6 157.6,97.6 162.9,96.4 168.1,94.2 173.4,96.4 178.6,93.5 183.9,40.4 189.2,7.1 194.4,8.4 199.7,6.5 204.9,8.4 210.2,6.4 215.4,6.4 220.7,8.4 225.9,8.4 231.2,5.2 236.4,7.2 241.7,7.2 246.9,5.2 252.2,8.4 257.5,5.2 262.7,5.2 268.0,6.4 273.2,6.4 278.5,7.6 283.7,8.4 289.0,7.4 294.2,5.2 299.5,5.2 304.7,7.4 310.0,4.7 310,101" fill="#f1f6fa"/></g><path d="M2 11.5 H309 M2 21.5 H309 M2 31.5 H309 M2 41.5 H309 M2 51.5 H309 M2 61.5 H309 M2 71.5 H309 M2 81.5 H309 M2 91.5 H309 M53.5 2 V100 M105.5 2 V100 M158.5 2 V100 M210.5 2 V100 M263.5 2 V100 " stroke="#117dbb" stroke-opacity="0.16" stroke-width="1" fill="none"/><g transform="translate(0.5,0.5)"><polyline points="0.0,91.5 5.3,94.6 10.5,92.1 15.8,93.9 21.0,95.4 26.3,67.7 31.5,6.1 36.8,5.1 42.0,5.1 47.3,5.1 52.5,2.3 57.8,3.3 63.1,2.3 68.3,2.3 73.6,1.1 78.8,3.3 84.1,76.3 89.3,84.8 94.6,86.4 99.8,89.2 105.1,81.4 110.3,91.1 115.6,93.9 120.8,96.4 126.1,93.2 131.4,95.3 136.6,95.3 141.9,94.2 147.1,86.4 152.4,90.6 157.6,97.6 162.9,96.4 168.1,94.2 173.4,96.4 178.6,93.5 183.9,40.4 189.2,7.1 194.4,8.4 199.7,6.5 204.9,8.4 210.2,6.4 215.4,6.4 220.7,8.4 225.9,8.4 231.2,5.2 236.4,7.2 241.7,7.2 246.9,5.2 252.2,8.4 257.5,5.2 262.7,5.2 268.0,6.4 273.2,6.4 278.5,7.6 283.7,8.4 289.0,7.4 294.2,5.2 299.5,5.2 304.7,7.4 310.0,4.7" fill="none" stroke="#117dbb" stroke-width="1.1" stroke-linejoin="round"/></g></svg>
<svg class="abs" style="left:1387px;top:383px" width="311" height="102" viewBox="0 0 311 102"><rect x="0.5" y="0.5" width="310" height="101" fill="#fff" stroke="#117dbb" stroke-width="1"/><g transform="translate(0.5,0.5)"><clipPath id="c30763"><rect x="1.5" y="1.5" width="307" height="98"/></clipPath><polygon clip-path="url(#c30763)" points="0,101 0.0,99.3 5.3,100.4 10.5,101.0 15.8,100.1 21.0,100.7 26.3,75.2 31.5,9.4 36.8,7.4 42.0,6.2 47.3,5.2 52.5,5.2 57.8,7.4 63.1,4.3 68.3,5.2 73.6,3.1 78.8,8.4 84.1,85.3 89.3,100.1 94.6,101.0 99.8,101.0 105.1,101.0 110.3,101.0 115.6,100.1 120.8,101.0 126.1,101.0 131.4,101.0 136.6,101.0 141.9,101.0 147.1,101.0 152.4,100.1 157.6,101.0 162.9,101.0 168.1,101.0 173.4,100.1 178.6,100.7 183.9,45.8 189.2,11.2 194.4,9.4 199.7,8.4 204.9,11.2 210.2,8.4 215.4,6.4 220.7,10.5 225.9,7.4 231.2,9.4 236.4,9.4 241.7,9.4 246.9,8.4 252.2,10.5 257.5,7.4 262.7,8.4 268.0,10.5 273.2,9.4 278.5,10.5 283.7,12.4 289.0,10.2 294.2,8.4 299.5,9.4 304.7,9.4 310.0,8.1 310,101" fill="#f1f6fa"/></g><path d="M2 11.5 H309 M2 21.5 H309 M2 31.5 H309 M2 41.5 H309 M2 51.5 H309 M2 61.5 H309 M2 71.5 H309 M2 81.5 H309 M2 91.5 H309 M53.5 2 V100 M105.5 2 V100 M158.5 2 V100 M210.5 2 V100 M263.5 2 V100 " stroke="#117dbb" stroke-opacity="0.16" stroke-width="1" fill="none"/><g transform="translate(0.5,0.5)"><polyline points="0.0,99.3 5.3,100.4 10.5,101.0 15.8,100.1 21.0,100.7 26.3,75.2 31.5,9.4 36.8,7.4 42.0,6.2 47.3,5.2 52.5,5.2 57.8,7.4 63.1,4.3 68.3,5.2 73.6,3.1 78.8,8.4 84.1,85.3 89.3,100.1 94.6,101.0 99.8,101.0 105.1,101.0 110.3,101.0 115.6,100.1 120.8,101.0 126.1,101.0 131.4,101.0 136.6,101.0 141.9,101.0 147.1,101.0 152.4,100.1 157.6,101.0 162.9,101.0 168.1,101.0 173.4,100.1 178.6,100.7 183.9,45.8 189.2,11.2 194.4,9.4 199.7,8.4 204.9,11.2 210.2,8.4 215.4,6.4 220.7,10.5 225.9,7.4 231.2,9.4 236.4,9.4 241.7,9.4 246.9,8.4 252.2,10.5 257.5,7.4 262.7,8.4 268.0,10.5 273.2,9.4 278.5,10.5 283.7,12.4 289.0,10.2 294.2,8.4 299.5,9.4 304.7,9.4 310.0,8.1" fill="none" stroke="#117dbb" stroke-width="1.1" stroke-linejoin="round"/></g></svg>
<svg class="abs" style="left:443px;top:489px" width="310" height="103" viewBox="0 0 310 103"><rect x="0.5" y="0.5" width="309" height="102" fill="#fff" stroke="#117dbb" stroke-width="1"/><g transform="translate(0.5,0.5)"><clipPath id="c60590"><rect x="1.5" y="1.5" width="306" height="99"/></clipPath><polygon clip-path="url(#c60590)" points="0,102 0.0,99.1 5.2,98.1 10.5,99.1 15.7,99.1 20.9,74.5 26.2,7.3 31.4,6.2 36.7,4.3 41.9,3.3 47.1,8.4 52.4,6.3 57.6,8.4 62.8,5.2 68.1,6.3 73.3,10.2 78.6,82.3 83.8,95.7 89.0,97.1 94.3,100.0 99.5,99.1 104.7,100.0 110.0,99.1 115.2,100.0 120.5,100.0 125.7,100.0 130.9,100.0 136.2,99.1 141.4,97.0 146.6,97.8 151.9,100.0 157.1,99.1 162.4,98.1 167.6,99.1 172.8,98.1 178.1,53.0 183.3,7.3 188.5,7.3 193.8,8.4 199.0,6.3 204.3,4.3 209.5,6.3 214.7,8.4 220.0,5.2 225.2,6.3 230.4,4.3 235.7,7.3 240.9,6.3 246.2,5.2 251.4,6.3 256.6,7.3 261.9,7.3 267.1,6.3 272.3,8.4 277.6,7.3 282.8,4.3 288.1,7.3 293.3,8.4 298.5,5.2 303.8,7.3 309.0,4.7 309,102" fill="#f1f6fa"/></g><path d="M2 11.5 H308 M2 21.5 H308 M2 31.5 H308 M2 41.5 H308 M2 51.5 H308 M2 62.5 H308 M2 72.5 H308 M2 82.5 H308 M2 92.5 H308 M52.5 2 V101 M105.5 2 V101 M157.5 2 V101 M209.5 2 V101 M262.5 2 V101 " stroke="#117dbb" stroke-opacity="0.16" stroke-width="1" fill="none"/><g transform="translate(0.5,0.5)"><polyline points="0.0,99.1 5.2,98.1 10.5,99.1 15.7,99.1 20.9,74.5 26.2,7.3 31.4,6.2 36.7,4.3 41.9,3.3 47.1,8.4 52.4,6.3 57.6,8.4 62.8,5.2 68.1,6.3 73.3,10.2 78.6,82.3 83.8,95.7 89.0,97.1 94.3,100.0 99.5,99.1 104.7,100.0 110.0,99.1 115.2,100.0 120.5,100.0 125.7,100.0 130.9,100.0 136.2,99.1 141.4,97.0 146.6,97.8 151.9,100.0 157.1,99.1 162.4,98.1 167.6,99.1 172.8,98.1 178.1,53.0 183.3,7.3 188.5,7.3 193.8,8.4 199.0,6.3 204.3,4.3 209.5,6.3 214.7,8.4 220.0,5.2 225.2,6.3 230.4,4.3 235.7,7.3 240.9,6.3 246.2,5.2 251.4,6.3 256.6,7.3 261.9,7.3 267.1,6.3 272.3,8.4 277.6,7.3 282.8,4.3 288.1,7.3 293.3,8.4 298.5,5.2 303.8,7.3 309.0,4.7" fill="none" stroke="#117dbb" stroke-width="1.1" stroke-linejoin="round"/></g></svg>
<svg class="abs" style="left:757px;top:489px" width="311" height="103" viewBox="0 0 311 103"><rect x="0.5" y="0.5" width="310" height="102" fill="#fff" stroke="#117dbb" stroke-width="1"/><g transform="translate(0.5,0.5)"><clipPath id="c98043"><rect x="1.5" y="1.5" width="307" height="99"/></clipPath><polygon clip-path="url(#c98043)" points="0,102 0.0,100.6 5.3,101.7 10.5,101.7 15.8,101.0 21.0,101.7 26.3,75.2 31.5,5.2 36.8,5.2 42.0,6.3 47.3,5.2 52.5,5.2 57.8,6.3 63.1,5.2 68.3,5.2 73.6,5.2 78.8,9.4 84.1,86.2 89.3,102.0 94.6,102.0 99.8,102.0 105.1,102.0 110.3,102.0 115.6,102.0 120.8,101.0 126.1,99.9 131.4,102.0 136.6,102.0 141.9,102.0 147.1,102.0 152.4,102.0 157.6,102.0 162.9,102.0 168.1,102.0 173.4,102.0 178.6,101.0 183.9,44.3 189.2,8.4 194.4,5.2 199.7,6.3 204.9,7.3 210.2,4.3 215.4,7.3 220.7,7.3 225.9,5.2 231.2,6.3 236.4,4.3 241.7,7.3 246.9,7.3 252.2,5.2 257.5,4.3 262.7,6.3 268.0,5.2 273.2,6.3 278.5,7.6 283.7,9.4 289.0,6.9 294.2,4.3 299.5,8.4 304.7,6.3 310.0,6.3 310,102" fill="#f1f6fa"/></g><path d="M2 11.5 H309 M2 21.5 H309 M2 31.5 H309 M2 41.5 H309 M2 51.5 H309 M2 62.5 H309 M2 72.5 H309 M2 82.5 H309 M2 92.5 H309 M53.5 2 V101 M105.5 2 V101 M158.5 2 V101 M210.5 2 V101 M263.5 2 V101 " stroke="#117dbb" stroke-opacity="0.16" stroke-width="1" fill="none"/><g transform="translate(0.5,0.5)"><polyline points="0.0,100.6 5.3,101.7 10.5,101.7 15.8,101.0 21.0,101.7 26.3,75.2 31.5,5.2 36.8,5.2 42.0,6.3 47.3,5.2 52.5,5.2 57.8,6.3 63.1,5.2 68.3,5.2 73.6,5.2 78.8,9.4 84.1,86.2 89.3,102.0 94.6,102.0 99.8,102.0 105.1,102.0 110.3,102.0 115.6,102.0 120.8,101.0 126.1,99.9 131.4,102.0 136.6,102.0 141.9,102.0 147.1,102.0 152.4,102.0 157.6,102.0 162.9,102.0 168.1,102.0 173.4,102.0 178.6,101.0 183.9,44.3 189.2,8.4 194.4,5.2 199.7,6.3 204.9,7.3 210.2,4.3 215.4,7.3 220.7,7.3 225.9,5.2 231.2,6.3 236.4,4.3 241.7,7.3 246.9,7.3 252.2,5.2 257.5,4.3 262.7,6.3 268.0,5.2 273.2,6.3 278.5,7.6 283.7,9.4 289.0,6.9 294.2,4.3 299.5,8.4 304.7,6.3 310.0,6.3" fill="none" stroke="#117dbb" stroke-width="1.1" stroke-linejoin="round"/></g></svg>
<svg class="abs" style="left:1072px;top:489px" width="311" height="103" viewBox="0 0 311 103"><rect x="0.5" y="0.5" width="310" height="102" fill="#fff" stroke="#117dbb" stroke-width="1"/><g transform="translate(0.5,0.5)"><clipPath id="c47876"><rect x="1.5" y="1.5" width="307" height="99"/></clipPath><polygon clip-path="url(#c47876)" points="0,102 0.0,98.5 5.3,100.0 10.5,101.0 15.8,100.0 21.0,101.0 26.3,75.9 31.5,9.4 36.8,5.2 42.0,4.1 47.3,4.1 52.5,3.1 57.8,7.3 63.1,5.2 68.3,5.2 73.6,4.1 78.8,7.3 84.1,83.7 89.3,100.0 94.6,100.0 99.8,100.0 105.1,95.0 110.3,98.8 115.6,101.0 120.8,101.0 126.1,100.0 131.4,101.0 136.6,101.0 141.9,101.0 147.1,101.0 152.4,100.0 157.6,101.0 162.9,101.0 168.1,101.0 173.4,100.0 178.6,100.0 183.9,50.0 189.2,2.3 194.4,6.3 199.7,6.3 204.9,4.3 210.2,5.2 215.4,4.3 220.7,5.2 225.9,4.3 231.2,5.2 236.4,6.3 241.7,6.3 246.9,5.2 252.2,5.2 257.5,4.1 262.7,3.1 268.0,6.3 273.2,6.3 278.5,6.3 283.7,5.2 289.0,3.3 294.2,3.3 299.5,6.3 304.7,4.3 310.0,6.3 310,102" fill="#f1f6fa"/></g><path d="M2 11.5 H309 M2 21.5 H309 M2 31.5 H309 M2 41.5 H309 M2 51.5 H309 M2 62.5 H309 M2 72.5 H309 M2 82.5 H309 M2 92.5 H309 M53.5 2 V101 M105.5 2 V101 M158.5 2 V101 M210.5 2 V101 M263.5 2 V101 " stroke="#117dbb" stroke-opacity="0.16" stroke-width="1" fill="none"/><g transform="translate(0.5,0.5)"><polyline points="0.0,98.5 5.3,100.0 10.5,101.0 15.8,100.0 21.0,101.0 26.3,75.9 31.5,9.4 36.8,5.2 42.0,4.1 47.3,4.1 52.5,3.1 57.8,7.3 63.1,5.2 68.3,5.2 73.6,4.1 78.8,7.3 84.1,83.7 89.3,100.0 94.6,100.0 99.8,100.0 105.1,95.0 110.3,98.8 115.6,101.0 120.8,101.0 126.1,100.0 131.4,101.0 136.6,101.0 141.9,101.0 147.1,101.0 152.4,100.0 157.6,101.0 162.9,101.0 168.1,101.0 173.4,100.0 178.6,100.0 183.9,50.0 189.2,2.3 194.4,6.3 199.7,6.3 204.9,4.3 210.2,5.2 215.4,4.3 220.7,5.2 225.9,4.3 231.2,5.2 236.4,6.3 241.7,6.3 246.9,5.2 252.2,5.2 257.5,4.1 262.7,3.1 268.0,6.3 273.2,6.3 278.5,6.3 283.7,5.2 289.0,3.3 294.2,3.3 299.5,6.3 304.7,4.3 310.0,6.3" fill="none" stroke="#117dbb" stroke-width="1.1" stroke-linejoin="round"/></g></svg>
<svg class="abs" style="left:1387px;top:489px" width="311" height="103" viewBox="0 0 311 103"><rect x="0.5" y="0.5" width="310" height="102" fill="#fff" stroke="#117dbb" stroke-width="1"/><g transform="translate(0.5,0.5)"><clipPath id="c76927"><rect x="1.5" y="1.5" width="307" height="99"/></clipPath><polygon clip-path="url(#c76927)" points="0,102 0.0,99.6 5.3,101.0 10.5,101.0 15.8,101.0 21.0,101.0 26.3,75.2 31.5,6.9 36.8,4.1 42.0,5.2 47.3,3.1 52.5,2.1 57.8,5.2 63.1,6.3 68.3,5.2 73.6,5.2 78.8,6.3 84.1,82.3 89.3,101.0 94.6,99.9 99.8,102.0 105.1,102.0 110.3,102.0 115.6,102.0 120.8,99.1 126.1,102.0 131.4,102.0 136.6,102.0 141.9,101.0 147.1,101.0 152.4,96.0 157.6,101.0 162.9,101.0 168.1,101.0 173.4,101.0 178.6,101.0 183.9,48.6 189.2,5.2 194.4,6.3 199.7,6.3 204.9,7.3 210.2,4.1 215.4,5.2 220.7,6.3 225.9,4.3 231.2,5.5 236.4,6.3 241.7,5.5 246.9,3.2 252.2,5.2 257.5,5.2 262.7,5.2 268.0,5.2 273.2,6.3 278.5,8.4 283.7,6.3 289.0,5.2 294.2,4.3 299.5,7.3 304.7,6.3 310.0,5.2 310,102" fill="#f1f6fa"/></g><path d="M2 11.5 H309 M2 21.5 H309 M2 31.5 H309 M2 41.5 H309 M2 51.5 H309 M2 62.5 H309 M2 72.5 H309 M2 82.5 H309 M2 92.5 H309 M53.5 2 V101 M105.5 2 V101 M158.5 2 V101 M210.5 2 V101 M263.5 2 V101 " stroke="#117dbb" stroke-opacity="0.16" stroke-width="1" fill="none"/><g transform="translate(0.5,0.5)"><polyline points="0.0,99.6 5.3,101.0 10.5,101.0 15.8,101.0 21.0,101.0 26.3,75.2 31.5,6.9 36.8,4.1 42.0,5.2 47.3,3.1 52.5,2.1 57.8,5.2 63.1,6.3 68.3,5.2 73.6,5.2 78.8,6.3 84.1,82.3 89.3,101.0 94.6,99.9 99.8,102.0 105.1,102.0 110.3,102.0 115.6,102.0 120.8,99.1 126.1,102.0 131.4,102.0 136.6,102.0 141.9,101.0 147.1,101.0 152.4,96.0 157.6,101.0 162.9,101.0 168.1,101.0 173.4,101.0 178.6,101.0 183.9,48.6 189.2,5.2 194.4,6.3 199.7,6.3 204.9,7.3 210.2,4.1 215.4,5.2 220.7,6.3 225.9,4.3 231.2,5.5 236.4,6.3 241.7,5.5 246.9,3.2 252.2,5.2 257.5,5.2 262.7,5.2 268.0,5.2 273.2,6.3 278.5,8.4 283.7,6.3 289.0,5.2 294.2,4.3 299.5,7.3 304.7,6.3 310.0,5.2" fill="none" stroke="#117dbb" stroke-width="1.1" stroke-linejoin="round"/></g></svg>
<svg class="abs" style="left:443px;top:596px" width="310" height="103" viewBox="0 0 310 103"><rect x="0.5" y="0.5" width="309" height="102" fill="#fff" stroke="#117dbb" stroke-width="1"/><g transform="translate(0.5,0.5)"><clipPath id="c28390"><rect x="1.5" y="1.5" width="306" height="99"/></clipPath><polygon clip-path="url(#c28390)" points="0,102 0.0,92.4 5.2,100.0 10.5,100.0 15.7,100.0 20.9,78.7 26.2,13.4 31.4,11.2 36.7,9.4 41.9,7.1 47.1,10.2 52.4,12.3 57.6,11.2 62.8,10.2 68.1,10.2 73.3,8.4 78.6,86.7 83.8,101.3 89.0,97.1 94.3,101.0 99.5,100.0 104.7,101.0 110.0,100.0 115.2,101.0 120.5,101.0 125.7,101.0 130.9,101.0 136.2,101.0 141.4,99.6 146.6,97.0 151.9,93.1 157.1,101.0 162.4,100.0 167.6,99.1 172.8,97.1 178.1,54.3 183.3,10.2 188.5,10.2 193.8,10.2 199.0,10.2 204.3,5.2 209.5,11.2 214.7,6.3 220.0,8.4 225.2,6.3 230.4,9.4 235.7,9.4 240.9,7.3 246.2,9.4 251.4,6.3 256.6,7.3 261.9,7.3 267.1,6.3 272.3,9.4 277.6,11.2 282.8,8.4 288.1,7.3 293.3,7.3 298.5,8.4 303.8,8.4 309.0,6.9 309,102" fill="#f1f6fa"/></g><path d="M2 11.5 H308 M2 21.5 H308 M2 31.5 H308 M2 41.5 H308 M2 51.5 H308 M2 62.5 H308 M2 72.5 H308 M2 82.5 H308 M2 92.5 H308 M52.5 2 V101 M105.5 2 V101 M157.5 2 V101 M209.5 2 V101 M262.5 2 V101 " stroke="#117dbb" stroke-opacity="0.16" stroke-width="1" fill="none"/><g transform="translate(0.5,0.5)"><polyline points="0.0,92.4 5.2,100.0 10.5,100.0 15.7,100.0 20.9,78.7 26.2,13.4 31.4,11.2 36.7,9.4 41.9,7.1 47.1,10.2 52.4,12.3 57.6,11.2 62.8,10.2 68.1,10.2 73.3,8.4 78.6,86.7 83.8,101.3 89.0,97.1 94.3,101.0 99.5,100.0 104.7,101.0 110.0,100.0 115.2,101.0 120.5,101.0 125.7,101.0 130.9,101.0 136.2,101.0 141.4,99.6 146.6,97.0 151.9,93.1 157.1,101.0 162.4,100.0 167.6,99.1 172.8,97.1 178.1,54.3 183.3,10.2 188.5,10.2 193.8,10.2 199.0,10.2 204.3,5.2 209.5,11.2 214.7,6.3 220.0,8.4 225.2,6.3 230.4,9.4 235.7,9.4 240.9,7.3 246.2,9.4 251.4,6.3 256.6,7.3 261.9,7.3 267.1,6.3 272.3,9.4 277.6,11.2 282.8,8.4 288.1,7.3 293.3,7.3 298.5,8.4 303.8,8.4 309.0,6.9" fill="none" stroke="#117dbb" stroke-width="1.1" stroke-linejoin="round"/></g></svg>
<svg class="abs" style="left:757px;top:596px" width="311" height="103" viewBox="0 0 311 103"><rect x="0.5" y="0.5" width="310" height="102" fill="#fff" stroke="#117dbb" stroke-width="1"/><g transform="translate(0.5,0.5)"><clipPath id="c88728"><rect x="1.5" y="1.5" width="307" height="99"/></clipPath><polygon clip-path="url(#c88728)" points="0,102 0.0,99.6 5.3,101.0 10.5,101.0 15.8,101.0 21.0,101.0 26.3,75.9 31.5,16.3 36.8,13.4 42.0,13.4 47.3,13.1 52.5,11.2 57.8,11.2 63.1,9.4 68.3,11.2 73.6,12.3 78.8,14.4 84.1,86.7 89.3,101.0 94.6,101.3 99.8,102.0 105.1,102.0 110.3,102.0 115.6,102.0 120.8,102.0 126.1,102.0 131.4,102.0 136.6,102.0 141.9,102.0 147.1,102.0 152.4,102.0 157.6,102.0 162.9,102.0 168.1,102.0 173.4,102.0 178.6,101.0 183.9,48.6 189.2,12.2 194.4,10.2 199.7,8.4 204.9,11.2 210.2,6.3 215.4,9.4 220.7,10.5 225.9,9.4 231.2,10.5 236.4,7.3 241.7,12.2 246.9,7.3 252.2,9.4 257.5,8.4 262.7,10.5 268.0,9.4 273.2,7.3 278.5,10.5 283.7,11.2 289.0,11.2 294.2,7.3 299.5,8.4 304.7,9.4 310.0,7.6 310,102" fill="#f1f6fa"/></g><path d="M2 11.5 H309 M2 21.5 H309 M2 31.5 H309 M2 41.5 H309 M2 51.5 H309 M2 62.5 H309 M2 72.5 H309 M2 82.5 H309 M2 92.5 H309 M53.5 2 V101 M105.5 2 V101 M158.5 2 V101 M210.5 2 V101 M263.5 2 V101 " stroke="#117dbb" stroke-opacity="0.16" stroke-width="1" fill="none"/><g transform="translate(0.5,0.5)"><polyline points="0.0,99.6 5.3,101.0 10.5,101.0 15.8,101.0 21.0,101.0 26.3,75.9 31.5,16.3 36.8,13.4 42.0,13.4 47.3,13.1 52.5,11.2 57.8,11.2 63.1,9.4 68.3,11.2 73.6,12.3 78.8,14.4 84.1,86.7 89.3,101.0 94.6,101.3 99.8,102.0 105.1,102.0 110.3,102.0 115.6,102.0 120.8,102.0 126.1,102.0 131.4,102.0 136.6,102.0 141.9,102.0 147.1,102.0 152.4,102.0 157.6,102.0 162.9,102.0 168.1,102.0 173.4,102.0 178.6,101.0 183.9,48.6 189.2,12.2 194.4,10.2 199.7,8.4 204.9,11.2 210.2,6.3 215.4,9.4 220.7,10.5 225.9,9.4 231.2,10.5 236.4,7.3 241.7,12.2 246.9,7.3 252.2,9.4 257.5,8.4 262.7,10.5 268.0,9.4 273.2,7.3 278.5,10.5 283.7,11.2 289.0,11.2 294.2,7.3 299.5,8.4 304.7,9.4 310.0,7.6" fill="none" stroke="#117dbb" stroke-width="1.1" stroke-linejoin="round"/></g></svg>
<svg class="abs" style="left:1072px;top:596px" width="311" height="103" viewBox="0 0 311 103"><rect x="0.5" y="0.5" width="310" height="102" fill="#fff" stroke="#117dbb" stroke-width="1"/><g transform="translate(0.5,0.5)"><clipPath id="c79616"><rect x="1.5" y="1.5" width="307" height="99"/></clipPath><polygon clip-path="url(#c79616)" points="0,102 0.0,88.7 5.3,52.1 10.5,95.3 15.8,98.1 21.0,95.3 26.3,72.9 31.5,8.4 36.8,7.1 42.0,7.1 47.3,5.7 52.5,4.1 57.8,6.3 63.1,5.2 68.3,5.2 73.6,5.2 78.8,7.3 84.1,81.6 89.3,88.7 94.6,90.0 99.8,97.8 105.1,97.8 110.3,99.1 115.6,97.0 120.8,99.1 126.1,101.3 131.4,96.0 136.6,96.0 141.9,96.0 147.1,85.9 152.4,69.1 157.6,97.0 162.9,99.1 168.1,99.1 173.4,98.1 178.6,93.1 183.9,41.4 189.2,5.2 194.4,7.3 199.7,6.3 204.9,6.3 210.2,4.3 215.4,6.3 220.7,6.3 225.9,5.2 231.2,3.2 236.4,3.2 241.7,6.3 246.9,6.3 252.2,5.2 257.5,4.3 262.7,6.3 268.0,6.3 273.2,3.2 278.5,5.7 283.7,8.4 289.0,6.3 294.2,6.3 299.5,7.3 304.7,6.3 310.0,6.3 310,102" fill="#f1f6fa"/></g><path d="M2 11.5 H309 M2 21.5 H309 M2 31.5 H309 M2 41.5 H309 M2 51.5 H309 M2 62.5 H309 M2 72.5 H309 M2 82.5 H309 M2 92.5 H309 M53.5 2 V101 M105.5 2 V101 M158.5 2 V101 M210.5 2 V101 M263.5 2 V101 " stroke="#117dbb" stroke-opacity="0.16" stroke-width="1" fill="none"/><g transform="translate(0.5,0.5)"><polyline points="0.0,88.7 5.3,52.1 10.5,95.3 15.8,98.1 21.0,95.3 26.3,72.9 31.5,8.4 36.8,7.1 42.0,7.1 47.3,5.7 52.5,4.1 57.8,6.3 63.1,5.2 68.3,5.2 73.6,5.2 78.8,7.3 84.1,81.6 89.3,88.7 94.6,90.0 99.8,97.8 105.1,97.8 110.3,99.1 115.6,97.0 120.8,99.1 126.1,101.3 131.4,96.0 136.6,96.0 141.9,96.0 147.1,85.9 152.4,69.1 157.6,97.0 162.9,99.1 168.1,99.1 173.4,98.1 178.6,93.1 183.9,41.4 189.2,5.2 194.4,7.3 199.7,6.3 204.9,6.3 210.2,4.3 215.4,6.3 220.7,6.3 225.9,5.2 231.2,3.2 236.4,3.2 241.7,6.3 246.9,6.3 252.2,5.2 257.5,4.3 262.7,6.3 268.0,6.3 273.2,3.2 278.5,5.7 283.7,8.4 289.0,6.3 294.2,6.3 299.5,7.3 304.7,6.3 310.0,6.3" fill="none" stroke="#117dbb" stroke-width="1.1" stroke-linejoin="round"/></g></svg>
<svg class="abs" style="left:1387px;top:596px" width="311" height="103" viewBox="0 0 311 103"><rect x="0.5" y="0.5" width="310" height="102" fill="#fff" stroke="#117dbb" stroke-width="1"/><g transform="translate(0.5,0.5)"><clipPath id="c14622"><rect x="1.5" y="1.5" width="307" height="99"/></clipPath><polygon clip-path="url(#c14622)" points="0,102 0.0,100.0 5.3,97.8 10.5,96.0 15.8,100.0 21.0,100.0 26.3,78.7 31.5,11.9 36.8,9.4 42.0,7.1 47.3,8.4 52.5,7.1 57.8,7.1 63.1,7.1 68.3,6.2 73.6,9.1 78.8,10.5 84.1,83.0 89.3,101.0 94.6,100.0 99.8,101.7 105.1,101.0 110.3,96.0 115.6,101.0 120.8,101.0 126.1,96.0 131.4,101.7 136.6,101.0 141.9,95.0 147.1,101.0 152.4,97.0 157.6,100.6 162.9,101.0 168.1,101.7 173.4,101.0 178.6,99.1 183.9,48.6 189.2,9.4 194.4,7.3 199.7,8.4 204.9,6.3 210.2,6.3 215.4,6.3 220.7,6.3 225.9,4.3 231.2,6.3 236.4,7.3 241.7,8.4 246.9,6.3 252.2,7.3 257.5,3.2 262.7,6.3 268.0,5.2 273.2,7.3 278.5,9.4 283.7,8.4 289.0,8.4 294.2,8.4 299.5,6.3 304.7,9.4 310.0,6.9 310,102" fill="#f1f6fa"/></g><path d="M2 11.5 H309 M2 21.5 H309 M2 31.5 H309 M2 41.5 H309 M2 51.5 H309 M2 62.5 H309 M2 72.5 H309 M2 82.5 H309 M2 92.5 H309 M53.5 2 V101 M105.5 2 V101 M158.5 2 V101 M210.5 2 V101 M263.5 2 V101 " stroke="#117dbb" stroke-opacity="0.16" stroke-width="1" fill="none"/><g transform="translate(0.5,0.5)"><polyline points="0.0,100.0 5.3,97.8 10.5,96.0 15.8,100.0 21.0,100.0 26.3,78.7 31.5,11.9 36.8,9.4 42.0,7.1 47.3,8.4 52.5,7.1 57.8,7.1 63.1,7.1 68.3,6.2 73.6,9.1 78.8,10.5 84.1,83.0 89.3,101.0 94.6,100.0 99.8,101.7 105.1,101.0 110.3,96.0 115.6,101.0 120.8,101.0 126.1,96.0 131.4,101.7 136.6,101.0 141.9,95.0 147.1,101.0 152.4,97.0 157.6,100.6 162.9,101.0 168.1,101.7 173.4,101.0 178.6,99.1 183.9,48.6 189.2,9.4 194.4,7.3 199.7,8.4 204.9,6.3 210.2,6.3 215.4,6.3 220.7,6.3 225.9,4.3 231.2,6.3 236.4,7.3 241.7,8.4 246.9,6.3 252.2,7.3 257.5,3.2 262.7,6.3 268.0,5.2 273.2,7.3 278.5,9.4 283.7,8.4 289.0,8.4 294.2,8.4 299.5,6.3 304.7,9.4 310.0,6.9" fill="none" stroke="#117dbb" stroke-width="1.1" stroke-linejoin="round"/></g></svg>
<svg class="abs" style="left:443px;top:703px" width="310" height="103" viewBox="0 0 310 103"><rect x="0.5" y="0.5" width="309" height="102" fill="#fff" stroke="#117dbb" stroke-width="1"/><g transform="translate(0.5,0.5)"><clipPath id="c77648"><rect x="1.5" y="1.5" width="306" height="99"/></clipPath><polygon clip-path="url(#c77648)" points="0,102 0.0,91.7 5.2,98.8 10.5,101.0 15.7,100.0 20.9,76.6 26.2,8.4 31.4,6.3 36.7,7.3 41.9,6.3 47.1,5.2 52.4,6.3 57.6,4.3 62.8,5.2 68.1,4.1 73.3,7.3 78.6,83.0 83.8,95.0 89.0,97.1 94.3,101.0 99.5,101.0 104.7,101.7 110.0,101.0 115.2,101.7 120.5,99.1 125.7,101.0 130.9,101.0 136.2,101.0 141.4,95.3 146.6,72.9 151.9,97.1 157.1,100.0 162.4,100.0 167.6,101.0 172.8,99.1 178.1,51.4 183.3,7.3 188.5,6.3 193.8,6.3 199.0,7.3 204.3,6.3 209.5,7.3 214.7,6.3 220.0,6.3 225.2,6.3 230.4,4.1 235.7,8.4 240.9,5.2 246.2,7.3 251.4,4.1 256.6,5.2 261.9,6.3 267.1,8.4 272.3,7.3 277.6,4.1 282.8,7.3 288.1,4.1 293.3,7.3 298.5,7.3 303.8,7.3 309.0,6.3 309,102" fill="#f1f6fa"/></g><path d="M2 11.5 H308 M2 21.5 H308 M2 31.5 H308 M2 41.5 H308 M2 51.5 H308 M2 62.5 H308 M2 72.5 H308 M2 82.5 H308 M2 92.5 H308 M52.5 2 V101 M105.5 2 V101 M157.5 2 V101 M209.5 2 V101 M262.5 2 V101 " stroke="#117dbb" stroke-opacity="0.16" stroke-width="1" fill="none"/><g transform="translate(0.5,0.5)"><polyline points="0.0,91.7 5.2,98.8 10.5,101.0 15.7,100.0 20.9,76.6 26.2,8.4 31.4,6.3 36.7,7.3 41.9,6.3 47.1,5.2 52.4,6.3 57.6,4.3 62.8,5.2 68.1,4.1 73.3,7.3 78.6,83.0 83.8,95.0 89.0,97.1 94.3,101.0 99.5,101.0 104.7,101.7 110.0,101.0 115.2,101.7 120.5,99.1 125.7,101.0 130.9,101.0 136.2,101.0 141.4,95.3 146.6,72.9 151.9,97.1 157.1,100.0 162.4,100.0 167.6,101.0 172.8,99.1 178.1,51.4 183.3,7.3 188.5,6.3 193.8,6.3 199.0,7.3 204.3,6.3 209.5,7.3 214.7,6.3 220.0,6.3 225.2,6.3 230.4,4.1 235.7,8.4 240.9,5.2 246.2,7.3 251.4,4.1 256.6,5.2 261.9,6.3 267.1,8.4 272.3,7.3 277.6,4.1 282.8,7.3 288.1,4.1 293.3,7.3 298.5,7.3 303.8,7.3 309.0,6.3" fill="none" stroke="#117dbb" stroke-width="1.1" stroke-linejoin="round"/></g></svg>
<svg class="abs" style="left:757px;top:703px" width="311" height="103" viewBox="0 0 311 103"><rect x="0.5" y="0.5" width="310" height="102" fill="#fff" stroke="#117dbb" stroke-width="1"/><g transform="translate(0.5,0.5)"><clipPath id="c89136"><rect x="1.5" y="1.5" width="307" height="99"/></clipPath><polygon clip-path="url(#c89136)" points="0,102 0.0,21.4 5.3,95.3 10.5,100.6 15.8,100.6 21.0,101.7 26.3,77.3 31.5,7.3 36.8,5.2 42.0,10.5 47.3,4.1 52.5,7.1 57.8,8.4 63.1,7.3 68.3,6.3 73.6,6.3 78.8,11.2 84.1,86.2 89.3,102.0 94.6,102.0 99.8,102.0 105.1,102.0 110.3,102.0 115.6,102.0 120.8,102.0 126.1,102.0 131.4,102.0 136.6,102.0 141.9,102.0 147.1,102.0 152.4,102.0 157.6,102.0 162.9,102.0 168.1,102.0 173.4,102.0 178.6,102.0 183.9,47.1 189.2,8.4 194.4,7.3 199.7,8.4 204.9,8.4 210.2,6.3 215.4,8.4 220.7,7.3 225.9,6.3 231.2,8.4 236.4,5.2 241.7,8.4 246.9,9.4 252.2,5.2 257.5,6.3 262.7,8.4 268.0,8.4 273.2,7.3 278.5,9.4 283.7,9.4 289.0,8.4 294.2,6.3 299.5,9.4 304.7,7.3 310.0,8.4 310,102" fill="#f1f6fa"/></g><path d="M2 11.5 H309 M2 21.5 H309 M2 31.5 H309 M2 41.5 H309 M2 51.5 H309 M2 62.5 H309 M2 72.5 H309 M2 82.5 H309 M2 92.5 H309 M53.5 2 V101 M105.5 2 V101 M158.5 2 V101 M210.5 2 V101 M263.5 2 V101 " stroke="#117dbb" stroke-opacity="0.16" stroke-width="1" fill="none"/><g transform="translate(0.5,0.5)"><polyline points="0.0,21.4 5.3,95.3 10.5,100.6 15.8,100.6 21.0,101.7 26.3,77.3 31.5,7.3 36.8,5.2 42.0,10.5 47.3,4.1 52.5,7.1 57.8,8.4 63.1,7.3 68.3,6.3 73.6,6.3 78.8,11.2 84.1,86.2 89.3,102.0 94.6,102.0 99.8,102.0 105.1,102.0 110.3,102.0 115.6,102.0 120.8,102.0 126.1,102.0 131.4,102.0 136.6,102.0 141.9,102.0 147.1,102.0 152.4,102.0 157.6,102.0 162.9,102.0 168.1,102.0 173.4,102.0 178.6,102.0 183.9,47.1 189.2,8.4 194.4,7.3 199.7,8.4 204.9,8.4 210.2,6.3 215.4,8.4 220.7,7.3 225.9,6.3 231.2,8.4 236.4,5.2 241.7,8.4 246.9,9.4 252.2,5.2 257.5,6.3 262.7,8.4 268.0,8.4 273.2,7.3 278.5,9.4 283.7,9.4 289.0,8.4 294.2,6.3 299.5,9.4 304.7,7.3 310.0,8.4" fill="none" stroke="#117dbb" stroke-width="1.1" stroke-linejoin="round"/></g></svg>
<svg class="abs" style="left:1072px;top:703px" width="311" height="103" viewBox="0 0 311 103"><rect x="0.5" y="0.5" width="310" height="102" fill="#fff" stroke="#117dbb" stroke-width="1"/><g transform="translate(0.5,0.5)"><clipPath id="c97252"><rect x="1.5" y="1.5" width="307" height="99"/></clipPath><polygon clip-path="url(#c97252)" points="0,102 0.0,83.0 5.3,100.0 10.5,101.0 15.8,102.0 21.0,101.0 26.3,75.9 31.5,10.2 36.8,6.3 42.0,7.3 47.3,5.2 52.5,6.3 57.8,7.3 63.1,7.3 68.3,6.3 73.6,6.3 78.8,9.4 84.1,85.2 89.3,101.0 94.6,96.0 99.8,101.0 105.1,102.0 110.3,102.0 115.6,102.0 120.8,101.0 126.1,101.0 131.4,101.0 136.6,102.0 141.9,101.0 147.1,100.0 152.4,97.8 157.6,101.0 162.9,101.0 168.1,101.0 173.4,96.0 178.6,101.3 183.9,51.4 189.2,5.2 194.4,9.4 199.7,8.4 204.9,7.3 210.2,5.2 215.4,8.4 220.7,5.2 225.9,7.3 231.2,6.3 236.4,5.2 241.7,9.4 246.9,6.3 252.2,5.2 257.5,7.3 262.7,7.3 268.0,7.3 273.2,5.2 278.5,7.3 283.7,8.4 289.0,7.3 294.2,6.3 299.5,8.4 304.7,7.3 310.0,8.4 310,102" fill="#f1f6fa"/></g><path d="M2 11.5 H309 M2 21.5 H309 M2 31.5 H309 M2 41.5 H309 M2 51.5 H309 M2 62.5 H309 M2 72.5 H309 M2 82.5 H309 M2 92.5 H309 M53.5 2 V101 M105.5 2 V101 M158.5 2 V101 M210.5 2 V101 M263.5 2 V101 " stroke="#117dbb" stroke-opacity="0.16" stroke-width="1" fill="none"/><g transform="translate(0.5,0.5)"><polyline points="0.0,83.0 5.3,100.0 10.5,101.0 15.8,102.0 21.0,101.0 26.3,75.9 31.5,10.2 36.8,6.3 42.0,7.3 47.3,5.2 52.5,6.3 57.8,7.3 63.1,7.3 68.3,6.3 73.6,6.3 78.8,9.4 84.1,85.2 89.3,101.0 94.6,96.0 99.8,101.0 105.1,102.0 110.3,102.0 115.6,102.0 120.8,101.0 126.1,101.0 131.4,101.0 136.6,102.0 141.9,101.0 147.1,100.0 152.4,97.8 157.6,101.0 162.9,101.0 168.1,101.0 173.4,96.0 178.6,101.3 183.9,51.4 189.2,5.2 194.4,9.4 199.7,8.4 204.9,7.3 210.2,5.2 215.4,8.4 220.7,5.2 225.9,7.3 231.2,6.3 236.4,5.2 241.7,9.4 246.9,6.3 252.2,5.2 257.5,7.3 262.7,7.3 268.0,7.3 273.2,5.2 278.5,7.3 283.7,8.4 289.0,7.3 294.2,6.3 299.5,8.4 304.7,7.3 310.0,8.4" fill="none" stroke="#117dbb" stroke-width="1.1" stroke-linejoin="round"/></g></svg>
<svg class="abs" style="left:1387px;top:703px" width="311" height="103" viewBox="0 0 311 103"><rect x="0.5" y="0.5" width="310" height="102" fill="#fff" stroke="#117dbb" stroke-width="1"/><g transform="translate(0.5,0.5)"><clipPath id="c45658"><rect x="1.5" y="1.5" width="307" height="99"/></clipPath><polygon clip-path="url(#c45658)" points="0,102 0.0,99.1 5.3,98.1 10.5,100.0 15.8,100.0 21.0,98.8 26.3,75.2 31.5,11.2 36.8,8.4 42.0,9.4 47.3,5.2 52.5,6.3 57.8,9.4 63.1,6.3 68.3,6.3 73.6,6.3 78.8,11.9 84.1,84.2 89.3,98.8 94.6,99.9 99.8,101.0 105.1,101.0 110.3,100.0 115.6,101.0 120.8,101.0 126.1,101.0 131.4,101.0 136.6,101.0 141.9,101.0 147.1,99.9 152.4,97.0 157.6,99.9 162.9,101.0 168.1,100.0 173.4,100.0 178.6,100.0 183.9,48.6 189.2,10.5 194.4,10.5 199.7,9.4 204.9,7.3 210.2,6.2 215.4,10.5 220.7,9.4 225.9,6.3 231.2,6.3 236.4,10.5 241.7,10.5 246.9,9.4 252.2,7.3 257.5,7.3 262.7,9.4 268.0,7.3 273.2,7.3 278.5,10.5 283.7,10.5 289.0,9.4 294.2,4.3 299.5,9.4 304.7,9.4 310.0,7.3 310,102" fill="#f1f6fa"/></g><path d="M2 11.5 H309 M2 21.5 H309 M2 31.5 H309 M2 41.5 H309 M2 51.5 H309 M2 62.5 H309 M2 72.5 H309 M2 82.5 H309 M2 92.5 H309 M53.5 2 V101 M105.5 2 V101 M158.5 2 V101 M210.5 2 V101 M263.5 2 V101 " stroke="#117dbb" stroke-opacity="0.16" stroke-width="1" fill="none"/><g transform="translate(0.5,0.5)"><polyline points="0.0,99.1 5.3,98.1 10.5,100.0 15.8,100.0 21.0,98.8 26.3,75.2 31.5,11.2 36.8,8.4 42.0,9.4 47.3,5.2 52.5,6.3 57.8,9.4 63.1,6.3 68.3,6.3 73.6,6.3 78.8,11.9 84.1,84.2 89.3,98.8 94.6,99.9 99.8,101.0 105.1,101.0 110.3,100.0 115.6,101.0 120.8,101.0 126.1,101.0 131.4,101.0 136.6,101.0 141.9,101.0 147.1,99.9 152.4,97.0 157.6,99.9 162.9,101.0 168.1,100.0 173.4,100.0 178.6,100.0 183.9,48.6 189.2,10.5 194.4,10.5 199.7,9.4 204.9,7.3 210.2,6.2 215.4,10.5 220.7,9.4 225.9,6.3 231.2,6.3 236.4,10.5 241.7,10.5 246.9,9.4 252.2,7.3 257.5,7.3 262.7,9.4 268.0,7.3 273.2,7.3 278.5,10.5 283.7,10.5 289.0,9.4 294.2,4.3 299.5,9.4 304.7,9.4 310.0,7.3" fill="none" stroke="#117dbb" stroke-width="1.1" stroke-linejoin="round"/></g></svg>
<div class="t" style="left:441.0px;top:839px;font-family:'Liberation Sans',sans-serif;font-size:12px;color:#707070;transform:scaleX(0.9992);transform-origin:0 0;">Auslastung</div>
<div class="t" style="left:519.4px;top:839px;font-family:'Liberation Sans',sans-serif;font-size:12px;color:#707070;transform:scaleX(1.0036);transform-origin:0 0;">Geschwindigkeit</div>
<div class="t" style="left:440.08px;top:862px;font-family:'Liberation Sans',sans-serif;font-size:20px;color:#000;transform:scaleX(0.9767);transform-origin:0 0;">95%</div>
<div class="t" style="left:519.4px;top:862px;font-family:'Liberation Sans',sans-serif;font-size:20px;color:#000;transform:scaleX(0.9527);transform-origin:0 0;">3,88 GHz</div>
<div class="t" style="left:440.12px;top:890px;font-family:'Liberation Sans',sans-serif;font-size:12px;color:#707070;transform:scaleX(0.9269);transform-origin:0 0;">Prozesse</div>
<div class="t" style="left:506.07px;top:890px;font-family:'Liberation Sans',sans-serif;font-size:12px;color:#707070;transform:scaleX(0.9384);transform-origin:0 0;">Threads</div>
<div class="t" style="left:568.95px;top:890px;font-family:'Liberation Sans',sans-serif;font-size:12px;color:#707070;transform:scaleX(1.0029);transform-origin:0 0;">Handles</div>
<div class="t" style="left:440.44px;top:913px;font-family:'Liberation Sans',sans-serif;font-size:20px;color:#000;transform:scaleX(1.0093);transform-origin:0 0;">178</div>
<div class="t" style="left:505.35px;top:913px;font-family:'Liberation Sans',sans-serif;font-size:20px;color:#000;transform:scaleX(1.0107);transform-origin:0 0;">2459</div>
<div class="t" style="left:569.27px;top:913px;font-family:'Liberation Sans',sans-serif;font-size:20px;color:#000;transform:scaleX(1.0041);transform-origin:0 0;">81823</div>
<div class="t" style="left:440.08px;top:941px;font-family:'Liberation Sans',sans-serif;font-size:12px;color:#707070;transform:scaleX(0.9682);transform-origin:0 0;">Betriebszeit</div>
<div class="t" style="left:440.41px;top:964px;font-family:'Liberation Sans',sans-serif;font-size:20px;color:#000;transform:scaleX(0.9475);transform-origin:0 0;">0:00:17:34</div>
<div class="t" style="left:636.05px;top:839px;font-family:'Liberation Sans',sans-serif;font-size:12px;color:#707070;transform:scaleX(0.9952);transform-origin:0 0;">Basisgeschwindigkeit:</div>
<div class="t" style="left:766.58px;top:839px;font-family:'Liberation Sans',sans-serif;font-size:12px;color:#000;transform:scaleX(0.9257);transform-origin:0 0;">3,70 GHz</div>
<div class="t" style="left:636.52px;top:857px;font-family:'Liberation Sans',sans-serif;font-size:12px;color:#707070;transform:scaleX(0.9632);transform-origin:0 0;">Sockets:</div>
<div class="t" style="left:766.1px;top:857px;font-family:'Liberation Sans',sans-serif;font-size:12px;color:#000;">1</div>
<div class="t" style="left:636.07px;top:875px;font-family:'Liberation Sans',sans-serif;font-size:12px;color:#707070;transform:scaleX(0.9783);transform-origin:0 0;">Kerne:</div>
<div class="t" style="left:766.5px;top:875px;font-family:'Liberation Sans',sans-serif;font-size:12px;color:#000;">8</div>
<div class="t" style="left:636.09px;top:893px;font-family:'Liberation Sans',sans-serif;font-size:12px;color:#707070;transform:scaleX(0.9622);transform-origin:0 0;">Logische Prozessoren:</div>
<div class="t" style="left:766.08px;top:893px;font-family:'Liberation Sans',sans-serif;font-size:12px;color:#000;transform:scaleX(1.0232);transform-origin:0 0;">16</div>
<div class="t" style="left:636.95px;top:911px;font-family:'Liberation Sans',sans-serif;font-size:12px;color:#707070;transform:scaleX(1.0074);transform-origin:0 0;">Virtualisierung:</div>
<div class="t" style="left:767.0px;top:911px;font-family:'Liberation Sans',sans-serif;font-size:12px;color:#000;transform:scaleX(1.0378);transform-origin:0 0;">Aktiviert</div>
<div class="t" style="left:636.06px;top:929px;font-family:'Liberation Sans',sans-serif;font-size:12px;color:#707070;transform:scaleX(0.9882);transform-origin:0 0;">L1-Cache:</div>
<div class="t" style="left:766.45px;top:929px;font-family:'Liberation Sans',sans-serif;font-size:12px;color:#000;transform:scaleX(0.9093);transform-origin:0 0;">768 KB</div>
<div class="t" style="left:636.06px;top:947px;font-family:'Liberation Sans',sans-serif;font-size:12px;color:#707070;transform:scaleX(0.9882);transform-origin:0 0;">L2-Cache:</div>
<div class="t" style="left:766.76px;top:947px;font-family:'Liberation Sans',sans-serif;font-size:12px;color:#000;transform:scaleX(0.9634);transform-origin:0 0;">4,0 MB</div>
<div class="t" style="left:636.06px;top:965px;font-family:'Liberation Sans',sans-serif;font-size:12px;color:#707070;transform:scaleX(0.9882);transform-origin:0 0;">L3-Cache:</div>
<div class="t" style="left:766.13px;top:965px;font-family:'Liberation Sans',sans-serif;font-size:12px;color:#000;transform:scaleX(0.9656);transform-origin:0 0;">16,0 MB</div>
<svg style="position:absolute;left:210px;top:1009px;" width="21" height="21" viewBox="0 0 21 21"><circle cx="10.5" cy="10.5" r="9.1" fill="#fff" stroke="#9c9c9c" stroke-width="1.1"/><path d="M6 12.6 L10.5 8 L15 12.6" fill="none" stroke="#a6a6a6" stroke-width="1.4"/></svg>
<div class="t" style="left:237.25px;top:1020px;font-family:'Liberation Sans',sans-serif;font-size:12px;color:#000;transform:scaleX(0.9735);transform-origin:0 0;">Weniger Details</div>
<div style="position:absolute;left:327px;top:1012px;width:1px;height:14px;background:#c8c8c8"></div>
<svg style="position:absolute;left:335.5px;top:1010.3px;" width="17" height="17" viewBox="0 0 17 17"><circle cx="8.5" cy="8.5" r="7.4" fill="#f7f7f5" stroke="#8c8c8c" stroke-width="1.5"/><path d="M4.6 11.5 A5 5 0 0 1 5 5.2" fill="none" stroke="#7fae7f" stroke-width="0.9"/><path d="M12.2 5.5 A5 5 0 0 1 12.2 11.5" fill="none" stroke="#f08a30" stroke-width="0.9"/><path d="M9.8 11 L5 4" stroke="#d0151c" stroke-width="2.1" stroke-linecap="round"/></svg>
<div class="t" style="left:356.44px;top:1020px;font-family:'Liberation Sans',sans-serif;font-size:12px;color:#0066cc;transform:scaleX(1.0122);transform-origin:0 0;">Ressourcenmonitor öffnen</div>
</body></html>
